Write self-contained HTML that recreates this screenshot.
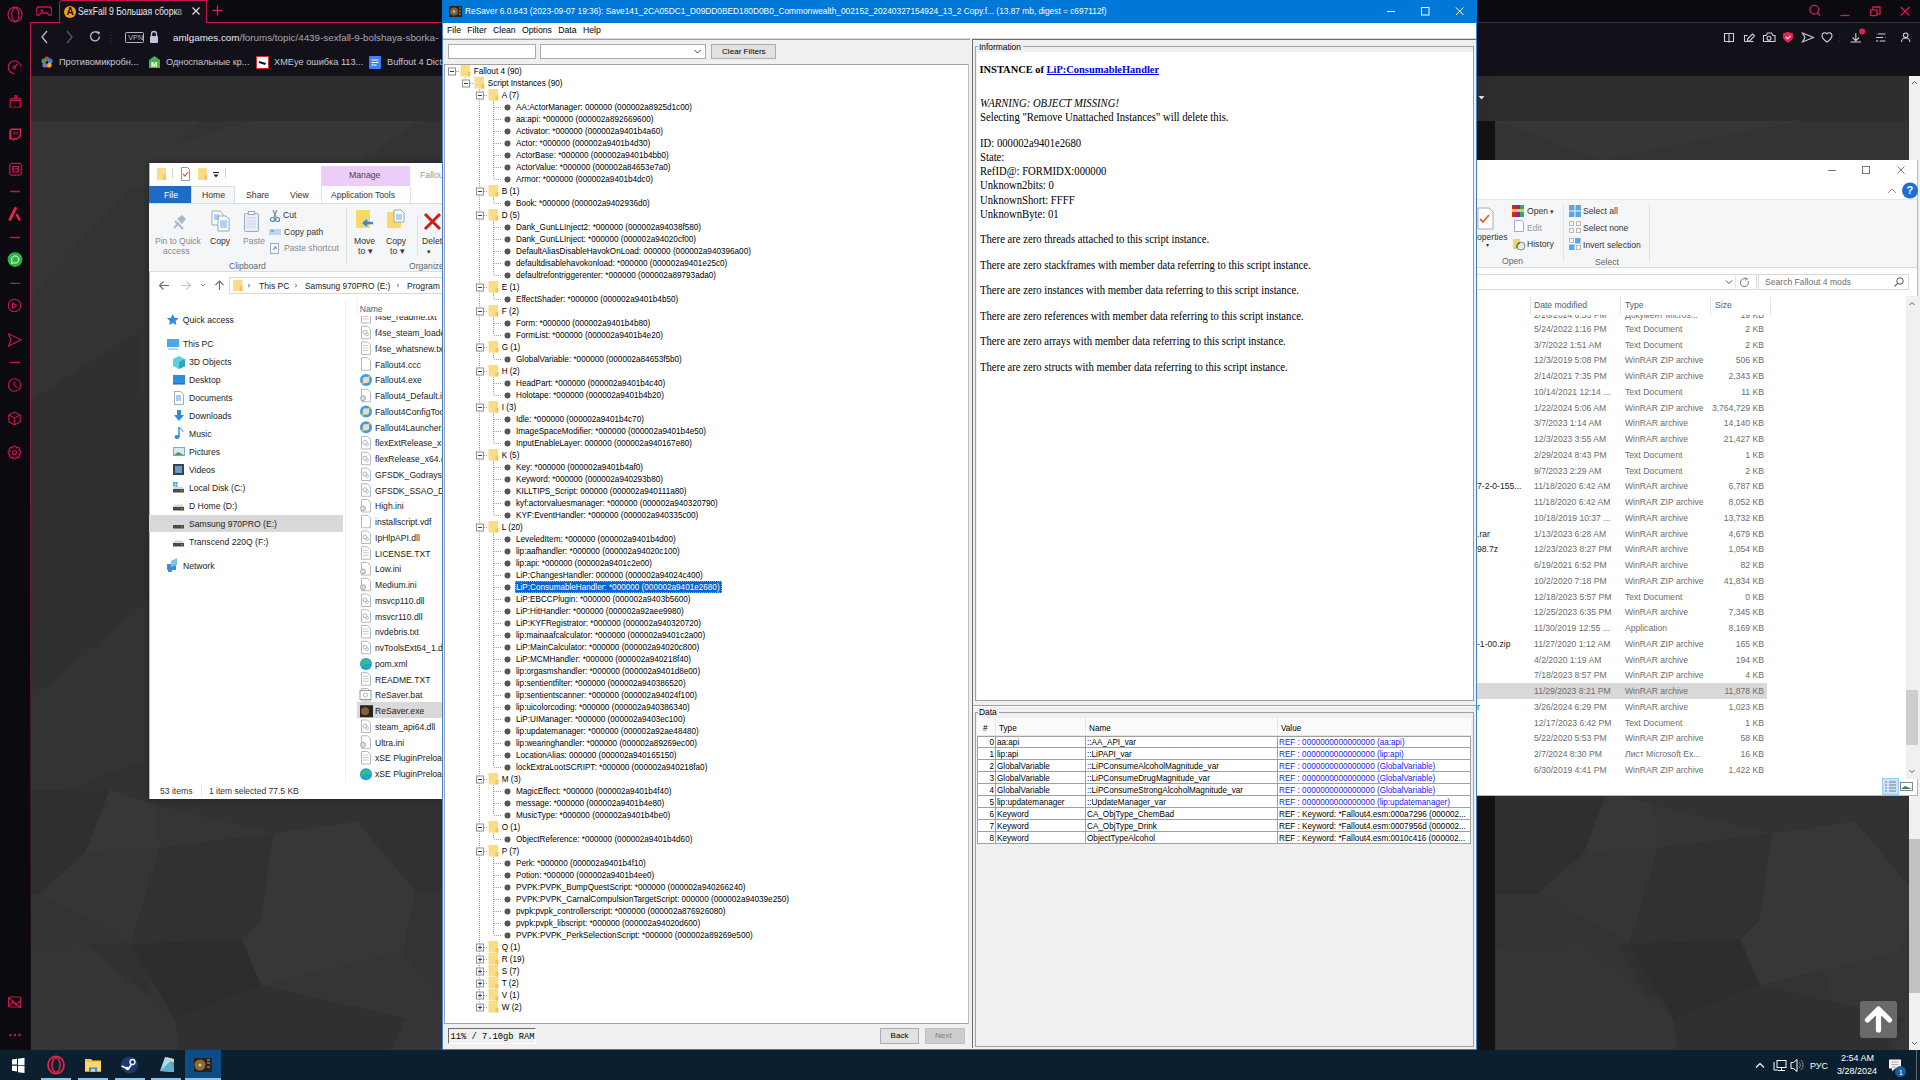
<!DOCTYPE html>
<html><head><meta charset="utf-8">
<style>
*{margin:0;padding:0;box-sizing:border-box}
html,body{width:1920px;height:1080px;overflow:hidden;background:#333;font-family:"Liberation Sans",sans-serif}
.a{position:absolute}
.t{position:absolute;white-space:nowrap;line-height:1}

</style></head><body>
<svg class="a" style="left:0;top:0" width="1920" height="1080" viewBox="0 0 1920 1080">
  <rect width="1920" height="1080" fill="#333"/>
  <!-- header band -->
  <rect x="31" y="76" width="1889" height="45" fill="#2e2e2e"/>
  <!-- subtle polygons -->
  <polygon points="31,121 31,300 80,240 200,121" fill="#353535"/>
  <polygon points="60,180 250,121 420,121 300,200" fill="#363636"/>
  <polygon points="31,400 140,330 149,600 31,700" fill="#303030"/>
  <polygon points="31,800 149,760 149,1050 31,1050" fill="#313131"/>
  <polygon points="160,900 300,840 420,1050 200,1050" fill="#2f2f2f"/>
  <polygon points="240,960 330,870 443,1000 443,1050 300,1050" fill="#353535"/>
  <polygon points="1495,121 1600,160 1800,121" fill="#363636"/>
  <polygon points="1560,840 1700,800 1800,900 1650,1000" fill="#303030"/>
  <polygon points="1780,850 1908,820 1908,1050 1850,1050" fill="#353535"/>
  <polygon points="1495,950 1600,1050 1495,1050" fill="#2f2f2f"/>
  <rect x="1477" y="121" width="18" height="929" fill="#121212"/>
</svg>
<div class="a" style="left:0;top:0;width:1920px;height:22px;background:#0b0a10"></div>
<div class="a" style="left:0;top:22px;width:30px;height:1028px;background:#0b0a10"></div>
<div class="a" style="left:31px;top:23px;width:1889px;height:53px;background:#12111a"></div>
<!-- red frame lines -->
<div class="a" style="left:30px;top:22px;width:1px;height:1028px;background:linear-gradient(#c21a44,#9a2040 27%,#5e1a30 60%,#150d14 95%)"></div>
<div class="a" style="left:30px;top:22px;width:30px;height:1px;background:#c21a44"></div>
<div class="a" style="left:206px;top:22px;width:800px;height:1px;background:#c21a44"></div>
<!-- active tab -->
<svg class="a" style="left:36px;top:5px" width="16" height="12"><path d="M3 2h10a2.5 2.5 0 0 1 2.4 2l0.6 4a2 2 0 0 1-3.5 1.5l-1.5-1.5h-6l-1.5 1.5a2 2 0 0 1-3.5-1.5l0.6-4a2.5 2.5 0 0 1 2.4-2z" fill="none" stroke="#c8194a" stroke-width="1.3"/><path d="M4.5 5.5h3M6 4v3" stroke="#c8194a"/></svg>
<div class="a" style="left:59px;top:0;width:148px;height:23px;background:#12111a;border:1px solid #c21a44;border-bottom:none;border-top-left-radius:4px"></div>
<div class="a" style="left:64px;top:6px;width:12px;height:12px;border-radius:50%;background:#f2a007"></div>
<div class="t" style="left:66.5px;top:7px;font-size:10px;font-weight:bold;color:#111">A</div>
<div class="t" style="left:78px;top:5.5px;font-size:8.6px;color:#e8e8f0;transform:scaleY(1.25);transform-origin:0 0">SexFall 9 Большая сборка</div>
<div class="a" style="left:176px;top:1px;width:12px;height:21px;background:linear-gradient(90deg,rgba(18,17,26,0),#12111a)"></div>
<svg class="a" style="left:191px;top:6px" width="10" height="10"><path d="M1.5 1.5L8.5 8.5M8.5 1.5L1.5 8.5" stroke="#ddd" stroke-width="1.2"/></svg>
<svg class="a" style="left:212px;top:5px" width="11" height="11"><path d="M5.5 0.5V10.5M0.5 5.5H10.5" stroke="#d91d4a" stroke-width="1.4"/></svg>
<!-- sidebar icons -->
<svg class="a" style="left:0;top:0" width="30" height="1050">
 <g fill="none" stroke="#c8194a" stroke-width="1.2">
  <ellipse cx="15" cy="14.5" rx="7" ry="7.3"/><ellipse cx="15.3" cy="14.5" rx="3.6" ry="6.6"/>
  <path d="M14.5 73.5 A6.3 6.3 0 1 1 20.8 66.5" /><path d="M20.8 68.5 v0.6 M20.6 70.5 v0.5" />
  <circle cx="14.3" cy="67.3" r="1.3"/><path d="M15.2 66.3 L17.5 64"/>
  <path d="M9.8 107 l0.8 -8.2 h9.6 l0.2 8.2z M14.8 98.8 v-3.3 h1.6 v3.3 M10.3 100.6 h10"/>
 </g>
 <path d="M12 103 h1.8 v4 h-1.8z M16.3 103 h1.8 v4 h-1.8z" fill="#0b0a10"/>
 <path d="M9.3 130.5 l1.5 -2 h10.2 v7.7 l-3.5 3.4 h-2.6 l-2.2 2 v-2 h-3.4z" fill="#e51f4f"/>
 <path d="M11.3 130 h8.3 v5.6 l-2.3 2.3 h-2.8 l-1.6 1.5 v-1.5 h-1.6z" fill="#0b0a10"/>
 <path d="M14.2 131.6 v3 M17.2 131.6 v3" stroke="#e51f4f" stroke-width="1.1"/>
 <g fill="none" stroke="#c8194a" stroke-width="1.1">
  <rect x="9.8" y="163.5" width="11.5" height="11.5" rx="1.5"/><rect x="12.8" y="166.5" width="5.5" height="5.5"/>
  <path d="M13.5 171 v-3.5 l2 2 l2 -2 v3.5" stroke-width="0.8"/>
  <path d="M12.5 162.5 v1 M15.5 162.5 v1 M18.5 162.5 v1 M12.5 175 v1 M15.5 175 v1 M18.5 175 v1 M8.8 166.5 h1 M8.8 169.5 h1 M8.8 172.5 h1 M21.3 166.5 h1 M21.3 169.5 h1 M21.3 172.5 h1"/>
 </g>
 <g stroke="#c8194a" stroke-width="1.3"><path d="M10.2 191.5 h9.6 M10.2 237.5 h9.6 M10.2 283.3 h9.6 M10.2 362.5 h9.6"/></g>
 <path d="M10 219.5 L15.5 208.3" stroke="#e51f4f" stroke-width="3" stroke-linecap="round"/><path d="M17 215 L19.3 219.5" stroke="#e51f4f" stroke-width="2.6" stroke-linecap="round"/>
 <circle cx="15" cy="259.6" r="7.4" fill="#2ab748"/>
 <path d="M11.3 263.5 l0.7 -2.3 a3.6 3.6 0 1 1 1.5 1.5z" fill="none" stroke="#fff" stroke-width="0.9"/>
 <g fill="none" stroke="#c8194a" stroke-width="1.1">
  <circle cx="14.5" cy="305.5" r="6.2"/><path d="M12.5 303 l4.2 2.5 l-4.2 2.5z"/>
  <path d="M8.5 333.8 l12.5 6 l-12.5 6.2 l2.5 -6.2z"/>
  <circle cx="14.5" cy="385" r="6.2"/><path d="M14.2 381.5 v3.5 l2.5 2.7"/>
  <path d="M14.5 412 l5.7 3 v7 l-5.7 3 l-5.7 -3 v-7z M8.8 415 l5.7 3 l5.7 -3 M14.5 418 v7"/>
  <path d="M13.2 446.3 h2.6 l0.5 1.7 l1.7 -0.8 l1.8 1.8 l-0.8 1.7 l1.7 0.5 v2.6 l-1.7 0.5 l0.8 1.7 l-1.8 1.8 l-1.7 -0.8 l-0.5 1.7 h-2.6 l-0.5 -1.7 l-1.7 0.8 l-1.8 -1.8 l0.8 -1.7 l-1.7 -0.5 v-2.6 l1.7 -0.5 l-0.8 -1.7 l1.8 -1.8 l1.7 0.8z"/><circle cx="14.5" cy="452.5" r="2"/>
  <rect x="8.5" y="997" width="12" height="10" rx="1"/><path d="M9 1006 l4 -4 l3 3 l4 -4"/><path d="M9 998 l12 10"/>
 </g>
 <g fill="#c8194a"><circle cx="10.5" cy="1035" r="1.2"/><circle cx="15" cy="1035" r="1.2"/><circle cx="19.5" cy="1035" r="1.2"/></g>
</svg>
<!-- address bar -->
<svg class="a" style="left:31px;top:23px" width="420" height="53">
 <g fill="none" stroke="#bdbcc8" stroke-width="1.3">
  <path d="M16 8 l-5 6 l5 6"/>
 </g>
 <path d="M36 8 l5 6 l-5 6" fill="none" stroke="#5a5966" stroke-width="1.3"/>
 <path d="M67 10 a4.5 4.5 0 1 0 1.5 3.5" fill="none" stroke="#bdbcc8" stroke-width="1.3"/><path d="M65 8 l4 1 l-1 3z" fill="#bdbcc8"/>
 <path d="M80 9 v1 M80 12 v1 M80 15 v1 M80 18 v1" stroke="#3c3b48" stroke-width="1"/>
 <rect x="94.5" y="9.5" width="18" height="10" rx="1" fill="none" stroke="#b8b7c4" stroke-width="1"/>
 <text x="97.3" y="17.3" font-size="7.2" fill="#b8b7c4" font-family="Liberation Sans">VPN</text>
 <rect x="119" y="13" width="8" height="7" rx="1" fill="#c9c0e0"/><path d="M120.5 13 v-2 a2.5 2.5 0 0 1 5 0 v2" fill="none" stroke="#c9c0e0" stroke-width="1.3"/>
 <text x="142" y="17.6" font-size="9.8" fill="#ecebf3" font-family="Liberation Sans">amlgames.com<tspan fill="#a9a8b5">/forums/topic/4439-sexfall-9-bolshaya-sborka-</tspan></text>
</svg>
<!-- bookmarks -->
<svg class="a" style="left:31px;top:52px" width="420" height="24">
 <g transform="translate(16,10)"><circle cx="0" cy="-3" r="2.6" fill="#e53935"/><circle cx="3" cy="-1" r="2.6" fill="#1e88e5"/><circle cx="2" cy="3" r="2.6" fill="#ffb300"/><circle cx="-2" cy="3" r="2.6" fill="#8e6bbf"/><circle cx="-3" cy="-1" r="2.6" fill="#43a047"/><circle cx="0" cy="0.5" r="1.3" fill="#111"/></g>
 <text x="28" y="13.3" font-size="9.2" fill="#c9c8d4" font-family="Liberation Sans">Противомикробн...</text>
 <path d="M118 16 v-8 l5.5 -4 l5.5 4 v8z" fill="#4caf50"/><text x="120" y="15" font-size="7.5" fill="#fff" font-weight="bold" font-family="Liberation Sans">M</text>
 <text x="135" y="13.3" font-size="9.2" fill="#c9c8d4" font-family="Liberation Sans">Односпальные кр...</text>
 <rect x="225.5" y="4.5" width="12" height="12" fill="#fff" stroke="#d32f2f" stroke-width="1"/><path d="M228 9 l7 2 l-1 2 l-6 -2z" fill="#111"/>
 <text x="243" y="13.3" font-size="9.2" fill="#c9c8d4" font-family="Liberation Sans">XMEye ошибка 113...</text>
 <rect x="338" y="4" width="12" height="13" rx="1" fill="#3b82f6"/><path d="M340.5 8h7M340.5 10.5h7M340.5 13h5" stroke="#fff" stroke-width="1"/>
 <text x="356" y="13.3" font-size="9.2" fill="#c9c8d4" font-family="Liberation Sans">Buffout 4 Dict</text>
</svg>
<!-- right side opera controls -->
<svg class="a" style="left:1700px;top:0" width="220" height="76">
 <g fill="none" stroke="#d91d4a" stroke-width="1.3">
  <circle cx="114.3" cy="9.7" r="4.3"/><path d="M117.3 12.8 l2.8 2.8"/>
  <path d="M140.4 15.5 h9.2"/>
  <rect x="170.5" y="9.8" width="6.5" height="5.8" rx="0.8"/><path d="M173 9.8 v-2.8 h7 v6.8 h-3"/>
  <path d="M200.8 7 l8.6 8.6 M209.4 7 l-8.6 8.6"/>
 </g>
 <g fill="none" stroke="#cfcfd8" stroke-width="1.1">
  <path d="M24.5 33.5 h4 l0.5 0.5 l0.5 -0.5 h4 v8 h-4 l-0.5 0.5 l-0.5 -0.5 h-4z M29 34 v7.5"/>
  <path d="M44.5 41.5 h9 M44.5 41.5 v-6 h3 M47.5 39 l5 -5 l2 2 l-5 5 h-2z"/>
  <path d="M63.5 35.5 h2.5 l1.5 -2.5 h4 l1.5 2.5 h2 v6 h-11.5z"/><circle cx="69" cy="38.3" r="2"/>
  <path d="M102.5 33 l11 4.5 l-11 4.5 l2.5 -4.5z"/>
  <path d="M122 35.5 a2.8 2.8 0 0 1 5 -1.7 a2.8 2.8 0 0 1 5 1.7 c0 3 -5 6.5 -5 6.5 s-5 -3.5 -5 -6.5z"/>
  <path d="M155.8 33 v7 M152.5 37.5 l3.3 3.3 l3.3 -3.3 M151 41.5 v0.5 h9.5 v-0.5"/>
  <path d="M176 34 h9.5 M176 37.5 h9.5 M176 41 h9.5"/>
  <circle cx="205.7" cy="35.3" r="2.3"/><path d="M201.5 42 a4.2 4 0 0 1 8.4 0"/>
 </g>
 <path d="M139.8 34 v1 M139.8 37 v1 M139.8 40 v1" stroke="#3c3b48"/>
 <path d="M176 34 h2 M183 37.5 h2 M178 41 h2" stroke="#12111a" stroke-width="1.5"/>
 <path d="M83 33.5 l5 -1.8 l5 1.8 v3.5 c0 3.5 -5 5.5 -5 5.5 s-5 -2 -5 -5.5z" fill="#e8234f"/><path d="M85.8 37 l1.8 1.8 l3 -3" fill="none" stroke="#fff" stroke-width="1.1"/>
 <circle cx="162.1" cy="31.5" r="3" fill="#e8234f"/>
</svg>
<div class="a" style="left:1909px;top:76px;width:11px;height:974px;background:#f0f0f0"></div>
<svg class="a" style="left:31px;top:0" width="412" height="1050"><polygon points="-73.2,790.0 78.4,790.0 54.4,852.6 8.6,893.5 -73.2,893.5" fill="#2f2f2f"/><polygon points="78.4,790.0 124.2,804.4 129.0,847.8 54.4,852.6" fill="#373737"/><polygon points="8.6,893.5 54.4,852.6 129.0,847.8 100.1,944.0" fill="#353535"/><polygon points="129.0,847.8 242.1,833.3 230.0,920.0 210.8,939.2 100.1,944.0" fill="#313131"/><polygon points="210.8,939.2 230.0,984.9 143.4,1018.6 100.1,944.0" fill="#2d2d2d"/><polygon points="242.1,833.3 326.3,821.3 384.1,891.1 372.0,951.3 230.0,984.9 210.8,939.2 230.0,920.0" fill="#373737"/><polygon points="143.4,1018.6 230.0,984.9 374.5,1018.6 360.0,1049.9 148.2,1049.9" fill="#303030"/><polygon points="-73.2,946.4 54.4,944.0 143.4,1018.6 148.2,1049.9 -73.2,1049.9" fill="#353535"/><polygon points="-73.2,893.5 8.6,893.5 100.1,944.0 54.4,944.0 -73.2,946.4" fill="#333333"/><polygon points="326.3,821.3 420.2,790.0 420.2,891.1 384.1,891.1" fill="#313131"/><polygon points="124.2,804.4 242.1,833.3 129.0,847.8" fill="#353535"/><polygon points="78.4,790.0 420.2,790.0 326.3,821.3 242.1,833.3 124.2,804.4" fill="#323232"/></svg><svg class="a" style="left:1495px;top:0" width="414" height="1050"><polygon points="-38.7,790.0 112.9,790.0 88.9,852.6 43.1,893.5 -38.7,893.5" fill="#2f2f2f"/><polygon points="112.9,790.0 158.7,804.4 163.5,847.8 88.9,852.6" fill="#373737"/><polygon points="43.1,893.5 88.9,852.6 163.5,847.8 134.6,944.0" fill="#353535"/><polygon points="163.5,847.8 276.6,833.3 264.5,920.0 245.3,939.2 134.6,944.0" fill="#313131"/><polygon points="245.3,939.2 264.5,984.9 177.9,1018.6 134.6,944.0" fill="#2d2d2d"/><polygon points="276.6,833.3 360.8,821.3 418.6,891.1 406.5,951.3 264.5,984.9 245.3,939.2 264.5,920.0" fill="#373737"/><polygon points="177.9,1018.6 264.5,984.9 409.0,1018.6 394.5,1049.9 182.7,1049.9" fill="#303030"/><polygon points="-38.7,946.4 88.9,944.0 177.9,1018.6 182.7,1049.9 -38.7,1049.9" fill="#353535"/><polygon points="-38.7,893.5 43.1,893.5 134.6,944.0 88.9,944.0 -38.7,946.4" fill="#333333"/><polygon points="360.8,821.3 454.7,790.0 454.7,891.1 418.6,891.1" fill="#313131"/><polygon points="158.7,804.4 276.6,833.3 163.5,847.8" fill="#353535"/><polygon points="112.9,790.0 454.7,790.0 360.8,821.3 276.6,833.3 158.7,804.4" fill="#323232"/></svg><div class="a" style="left:1909px;top:839px;width:11px;height:154px;background:#c1c1c1"></div>
<svg class="a" style="left:1909px;top:76px" width="11" height="974"><path d="M3 8l2.5-2.5l2.5 2.5" stroke="#606060" fill="none"/><path d="M3 966l2.5 2.5l2.5-2.5" stroke="#606060" fill="none"/></svg>
<div class="a" style="left:1860px;top:1001px;width:37px;height:37px;background:#6a6a6a;border-radius:3px"></div>
<svg class="a" style="left:1860px;top:1001px" width="37" height="37"><path d="M18.5 8l-11 11M18.5 8l11 11M18.5 9v20" stroke="#fff" stroke-width="5.2" stroke-linecap="round" fill="none"/></svg>
<div class="a" style="left:1477px;top:76px;width:18px;height:45px;background:#2c2c2c"></div>
<svg class="a" style="left:1478px;top:95px" width="8" height="6"><path d="M0.5 1h6l-3 3.5z" fill="#ddd"/></svg>
<div class="a" style="left:149px;top:163px;width:294px;height:636px;background:#fff;box-shadow:0 0 6px rgba(0,0,0,.35);border-left:1px solid #b8b8b8"></div>
<svg class="a" style="left:149px;top:163px" width="294" height="24">
<path d="M8 5h9v12h-9z" fill="#f9dc84"/><path d="M14.5 12h2.5v5h-2.5z" fill="#eec55a"/>
<path d="M23.5 5v10" stroke="#cfcfcf"/>
<path d="M32.5 4.5h6l2 2v11h-8z" fill="#fff" stroke="#9a9a9a"/><path d="M34 11l2 2l3-4" stroke="#e8542a" stroke-width="1.2" fill="none"/>
<path d="M49 5h9v12h-9z" fill="#f9dc84"/><path d="M55.5 12h2.5v5h-2.5z" fill="#eec55a"/>
<path d="M64 9.5h6" stroke="#222"/><path d="M64.5 11.5h5l-2.5 3z" fill="#222"/>
<path d="M76.5 5v10" stroke="#cfcfcf"/>
</svg>
<div class="a" style="left:321px;top:166px;width:89px;height:20px;background:#eccdf7"></div>
<div class="t" style="left:349px;top:171.32px;font-size:8.7px;color:#444;">Manage</div>
<div class="t" style="left:420px;top:170.82px;font-size:8.7px;color:#999;">Fallou</div>
<div class="a" style="left:149px;top:186px;width:42px;height:17px;background:#1f6dc2"></div>
<div class="t" style="left:164px;top:190.82px;font-size:8.7px;color:#fff;">File</div>
<div class="a" style="left:191px;top:186px;width:43.5px;height:18px;background:#f5f6f7;border:1px solid #dadbdc;border-bottom:none"></div>
<div class="t" style="left:202px;top:190.82px;font-size:8.7px;color:#333;">Home</div>
<div class="t" style="left:246px;top:190.82px;font-size:8.7px;color:#333;">Share</div>
<div class="t" style="left:290px;top:190.82px;font-size:8.7px;color:#333;">View</div>
<div class="a" style="left:320.5px;top:186px;width:1px;height:17px;background:#eadcf0"></div>
<div class="a" style="left:409.5px;top:186px;width:1px;height:17px;background:#eadcf0"></div>
<div class="t" style="left:331px;top:190.90px;font-size:8.55px;color:#333;">Application Tools</div>
<div class="a" style="left:149px;top:203px;width:294px;height:69px;background:#f5f6f7;border-top:1px solid #dadbdc;border-bottom:1px solid #dadbdc"></div>
<svg class="a" style="left:149px;top:203px" width="294" height="69">
<g transform="translate(22,11)"><path d="M3 14l5-5" stroke="#a9b8cc" stroke-width="2"/><path d="M6 5l5-4l4 4l-4 5z" fill="#a9b8cc"/><path d="M4 7l8 8" stroke="#a9b8cc" stroke-width="2"/></g>
<g transform="translate(62,7)"><path d="M1 1h8l3 3v11h-11z" fill="#fff" stroke="#9aa"/><path d="M7 6h8l3 3v12h-11z" fill="#fff" stroke="#9aa"/><path d="M9 11h7M9 13h7M9 15h7M9 17h7M3 5h5M3 7h5M3 9h5" stroke="#6aa0e6" stroke-width="1"/></g>
<g transform="translate(95,8)"><rect x="0.5" y="2.5" width="14" height="18" rx="1" fill="#e8eef8" stroke="#9aaac0"/><rect x="4.5" y="0.5" width="6" height="3" fill="#fff" stroke="#9aaac0"/><path d="M3 7h9M3 10h9M3 13h9M3 16h9" stroke="#c8d4e6"/></g>
<g transform="translate(121,6)" fill="none" stroke="#3b89c8" stroke-width="1.2"><circle cx="2.5" cy="10.5" r="2"/><circle cx="7.5" cy="10.5" r="2"/><path d="M3.5 9L7 1M6.5 9L3 1" stroke="#888"/></g>
<rect x="120" y="26" width="12" height="6" fill="#b9d8f2"/><path d="M122 28h3" stroke="#4a7aa8"/>
<g transform="translate(121,40)"><rect x="0.5" y="0.5" width="8" height="10" fill="#f4f6fa" stroke="#9aaac0"/><path d="M3 7l3-3M4 4h2v2" stroke="#5a8ac0" fill="none"/></g>
<path d="M197.5 5v56" stroke="#e2e3e4"/>
<g transform="translate(207,7)"><path d="M0 0h14v18h-14z" fill="#f9d86a"/><path d="M8 13h9M11 10l-3 3l3 3" stroke="#2e8ce0" stroke-width="2.4" fill="none"/></g>
<g transform="translate(238,7)"><path d="M0 2h14v16h-14z" fill="#f9d86a"/><path d="M7 0h7l3 3v9h-10z" fill="#fff" stroke="#9aa"/><path d="M9 5h6M9 7h6M9 9h6" stroke="#6aa0e6"/></g>
<path d="M268.5 12v40" stroke="#e2e3e4"/>
<path d="M276 11l15 15M291 11l-15 15" stroke="#d51a1a" stroke-width="3"/>
</svg>
<div class="t" style="left:155px;top:236.92px;font-size:8.5px;color:#888;">Pin to Quick</div>
<div class="t" style="left:163px;top:246.92px;font-size:8.5px;color:#888;">access</div>
<div class="t" style="left:210px;top:236.87px;font-size:8.6px;color:#333;">Copy</div>
<div class="t" style="left:243px;top:236.87px;font-size:8.6px;color:#888;">Paste</div>
<div class="t" style="left:283px;top:210.87px;font-size:8.6px;color:#333;">Cut</div>
<div class="t" style="left:284px;top:227.87px;font-size:8.6px;color:#333;">Copy path</div>
<div class="t" style="left:284px;top:243.87px;font-size:8.6px;color:#888;">Paste shortcut</div>
<div class="t" style="left:229px;top:261.87px;font-size:8.6px;color:#666;">Clipboard</div>
<div class="t" style="left:354px;top:236.87px;font-size:8.6px;color:#333;">Move</div>
<div class="t" style="left:358px;top:246.87px;font-size:8.6px;color:#333;">to ▾</div>
<div class="t" style="left:386px;top:236.87px;font-size:8.6px;color:#333;">Copy</div>
<div class="t" style="left:390px;top:246.87px;font-size:8.6px;color:#333;">to ▾</div>
<div class="t" style="left:422px;top:236.87px;font-size:8.6px;color:#333;">Delet</div>
<div class="t" style="left:427px;top:247.64px;font-size:7px;color:#333;">▾</div>
<div class="t" style="left:409px;top:261.87px;font-size:8.6px;color:#666;">Organize</div>
<svg class="a" style="left:149px;top:272px" width="294" height="27">
<path d="M11 13.5h9M14.5 9.5l-4 4l4 4" stroke="#6b6b6b" stroke-width="1.1" fill="none"/>
<path d="M32 13.5h9M37.5 9.5l4 4l-4 4" stroke="#c8c8c8" stroke-width="1.1" fill="none"/>
<path d="M52 12l2 2l2-2" stroke="#8a8a8a" fill="none"/>
<path d="M70.5 18V9.5M66.5 13l4-4l4 4" stroke="#6b6b6b" stroke-width="1.1" fill="none"/>
<rect x="80.5" y="5.5" width="220" height="16" fill="#fff" stroke="#d9d9d9"/>
<path d="M84 8h9.5v11h-9.5z" fill="#f9dc84"/><path d="M90.5 14h3v5h-3z" fill="#eec55a"/>
<path d="M99 12l2 1.5l-2 1.5M146 12l2 1.5l-2 1.5M248 12l2 1.5l-2 1.5" stroke="#777" fill="none"/>
</svg>
<div class="t" style="left:259px;top:281.57px;font-size:8.6px;color:#222;">This PC</div>
<div class="t" style="left:305px;top:281.69px;font-size:8.35px;color:#222;">Samsung 970PRO (E:)</div>
<div class="t" style="left:407px;top:281.57px;font-size:8.6px;color:#222;">Program</div>
<div class="a" style="left:345px;top:299px;width:1px;height:484px;background:#f0f0f0"></div>
<div class="a" style="left:149px;top:515px;width:194px;height:17px;background:#d9d9d9"></div>
<div class="t" style="left:182.8px;top:315.87px;font-size:8.6px;color:#222;">Quick access</div>
<div class="t" style="left:183px;top:339.87px;font-size:8.6px;color:#222;">This PC</div>
<div class="t" style="left:189px;top:357.87px;font-size:8.6px;color:#222;">3D Objects</div>
<div class="t" style="left:189px;top:375.87px;font-size:8.6px;color:#222;">Desktop</div>
<div class="t" style="left:189px;top:393.87px;font-size:8.6px;color:#222;">Documents</div>
<div class="t" style="left:189px;top:411.87px;font-size:8.6px;color:#222;">Downloads</div>
<div class="t" style="left:189px;top:429.87px;font-size:8.6px;color:#222;">Music</div>
<div class="t" style="left:189px;top:447.87px;font-size:8.6px;color:#222;">Pictures</div>
<div class="t" style="left:189px;top:465.87px;font-size:8.6px;color:#222;">Videos</div>
<div class="t" style="left:189px;top:483.87px;font-size:8.6px;color:#222;">Local Disk (C:)</div>
<div class="t" style="left:189px;top:501.87px;font-size:8.6px;color:#222;">D Home (D:)</div>
<div class="t" style="left:189px;top:519.87px;font-size:8.6px;color:#222;">Samsung 970PRO (E:)</div>
<div class="t" style="left:189px;top:537.87px;font-size:8.6px;color:#222;">Transcend 220Q (F:)</div>
<div class="t" style="left:183px;top:561.87px;font-size:8.6px;color:#222;">Network</div>
<svg class="a" style="left:149px;top:290px" width="200" height="300"><path d="M23.80000000000001 24l1.8 3.8l4 .5l-3 2.8l.8 4l-3.6-2l-3.6 2l.8-4l-3-2.8l4-.5z" fill="#2f8ce0"/><rect x="18" y="49" width="12" height="8" fill="#49a8e8"/><path d="M19 59h10" stroke="#9ab"/><path d="M30 66l6 3v7l-6 3l-6-3v-7z" fill="#5fd0e0"/><path d="M30 72l6-3v7l-6 3z" fill="#2aa6c0"/><rect x="24" y="85" width="12" height="9" fill="#2f8ce0"/><path d="M24 94h12" stroke="#1b5fa8"/><path d="M25.5 101.5h6l3 3v10h-9z" fill="#fff" stroke="#aaa"/><path d="M27 106h5M27 108h5M27 110h5" stroke="#5a9ae0"/><path d="M28 120h4v5h3l-5 6l-5-6h3z" fill="#2f8ce0"/><path d="M30 137v10" stroke="#2f8ce0" stroke-width="1.5"/><ellipse cx="28" cy="147" rx="2.5" ry="2" fill="#2f8ce0"/><path d="M30 137q3 2 4 5" stroke="#2f8ce0" fill="none"/><rect x="24.5" y="157.5" width="11" height="8" fill="#dbe8f0" stroke="#8aa"/><path d="M25 165l4-3l6 3z" fill="#4a9a60"/><rect x="24" y="174" width="11" height="11" fill="#345"/><rect x="26" y="176" width="7" height="7" fill="#6a9ad0"/><path d="M25.5 196.5h8l1.5 2.5h-11z" fill="#d8d8d8"/><rect x="24" y="199" width="11" height="3.5" fill="#4a4a4a"/><rect x="32" y="200" width="1.5" height="1.2" fill="#3c3"/><path d="M24 192h2v2h-2zM26.5 192h2v2h-2zM24 194.5h2v2h-2zM26.5 194.5h2v2h-2z" fill="#2fa0f0"/><path d="M25.5 214.5h8l1.5 2.5h-11z" fill="#d8d8d8"/><rect x="24" y="217" width="11" height="3.5" fill="#4a4a4a"/><rect x="32" y="218" width="1.5" height="1.2" fill="#3c3"/><path d="M25.5 232.5h8l1.5 2.5h-11z" fill="#d8d8d8"/><rect x="24" y="235" width="11" height="3.5" fill="#4a4a4a"/><rect x="32" y="236" width="1.5" height="1.2" fill="#3c3"/><path d="M25.5 250.5h8l1.5 2.5h-11z" fill="#d8d8d8"/><rect x="24" y="253" width="11" height="3.5" fill="#4a4a4a"/><rect x="32" y="254" width="1.5" height="1.2" fill="#3c3"/><path d="M18 274h9v6h-9z" fill="#3b8fd8"/><path d="M22 271l6-3v7l-6 2z" fill="#7ec0f0"/><rect x="19" y="280" width="4" height="2" fill="#3b8fd8"/></svg>
<div class="t" style="left:359.7px;top:304.87px;font-size:8.6px;color:#4c607a;">Name</div>
<div class="a" style="left:357px;top:702px;width:86px;height:16px;background:#d9d9d9"></div>
<div class="t" style="left:375px;top:313.37px;font-size:8.6px;color:#222;">f4se_readme.txt</div>
<div class="t" style="left:375px;top:329.12px;font-size:8.6px;color:#222;">f4se_steam_loader.dll</div>
<div class="t" style="left:375px;top:344.87px;font-size:8.6px;color:#222;">f4se_whatsnew.txt</div>
<div class="t" style="left:375px;top:360.62px;font-size:8.6px;color:#222;">Fallout4.ccc</div>
<div class="t" style="left:375px;top:376.37px;font-size:8.6px;color:#222;">Fallout4.exe</div>
<div class="t" style="left:375px;top:392.12px;font-size:8.6px;color:#222;">Fallout4_Default.ini</div>
<div class="t" style="left:375px;top:407.87px;font-size:8.6px;color:#222;">Fallout4ConfigTool.exe</div>
<div class="t" style="left:375px;top:423.62px;font-size:8.6px;color:#222;">Fallout4Launcher.exe</div>
<div class="t" style="left:375px;top:439.37px;font-size:8.6px;color:#222;">flexExtRelease_x64.dll</div>
<div class="t" style="left:375px;top:455.12px;font-size:8.6px;color:#222;">flexRelease_x64.dll</div>
<div class="t" style="left:375px;top:470.87px;font-size:8.6px;color:#222;">GFSDK_GodraysLib.x64.dll</div>
<div class="t" style="left:375px;top:486.62px;font-size:8.6px;color:#222;">GFSDK_SSAO_D3D11.win64.dll</div>
<div class="t" style="left:375px;top:502.37px;font-size:8.6px;color:#222;">High.ini</div>
<div class="t" style="left:375px;top:518.12px;font-size:8.6px;color:#222;">installscript.vdf</div>
<div class="t" style="left:375px;top:533.87px;font-size:8.6px;color:#222;">IpHlpAPI.dll</div>
<div class="t" style="left:375px;top:549.62px;font-size:8.6px;color:#222;">LICENSE.TXT</div>
<div class="t" style="left:375px;top:565.37px;font-size:8.6px;color:#222;">Low.ini</div>
<div class="t" style="left:375px;top:581.12px;font-size:8.6px;color:#222;">Medium.ini</div>
<div class="t" style="left:375px;top:596.87px;font-size:8.6px;color:#222;">msvcp110.dll</div>
<div class="t" style="left:375px;top:612.62px;font-size:8.6px;color:#222;">msvcr110.dll</div>
<div class="t" style="left:375px;top:628.37px;font-size:8.6px;color:#222;">nvdebris.txt</div>
<div class="t" style="left:375px;top:644.12px;font-size:8.6px;color:#222;">nvToolsExt64_1.dll</div>
<div class="t" style="left:375px;top:659.87px;font-size:8.6px;color:#222;">pom.xml</div>
<div class="t" style="left:375px;top:675.62px;font-size:8.6px;color:#222;">README.TXT</div>
<div class="t" style="left:375px;top:691.37px;font-size:8.6px;color:#222;">ReSaver.bat</div>
<div class="t" style="left:375px;top:707.12px;font-size:8.6px;color:#222;">ReSaver.exe</div>
<div class="t" style="left:375px;top:722.87px;font-size:8.6px;color:#222;">steam_api64.dll</div>
<div class="t" style="left:375px;top:738.62px;font-size:8.6px;color:#222;">Ultra.ini</div>
<div class="t" style="left:375px;top:754.37px;font-size:8.6px;color:#222;">xSE PluginPreloader.txt</div>
<div class="t" style="left:375px;top:770.12px;font-size:8.6px;color:#222;">xSE PluginPreloader.html</div>
<svg class="a" style="left:355px;top:300px" width="88" height="490"><path d="M6.5 10.5h6l3 3v9.5h-9z" fill="#fff" stroke="#b8b8b8"/><path d="M8 14.0h5.5M8 16.5h5.5M8 19.0h5.5" stroke="#bdbdbd" stroke-width="0.8"/><path d="M6.5 26.25h6l3 3v9.5h-9z" fill="#fff" stroke="#b8b8b8"/><circle cx="10" cy="32.25" r="2" fill="none" stroke="#a8b8c8"/><circle cx="12" cy="34.25" r="1.5" fill="none" stroke="#a8c8e0"/><path d="M6.5 42.0h6l3 3v9.5h-9z" fill="#fff" stroke="#b8b8b8"/><path d="M8 45.5h5.5M8 48.0h5.5M8 50.5h5.5" stroke="#bdbdbd" stroke-width="0.8"/><path d="M6.5 57.75h6l3 3v9.5h-9z" fill="#fff" stroke="#b8b8b8"/><circle cx="11" cy="80.0" r="6" fill="#3d9be8"/><path d="M7 84.0L15 76.0" stroke="#f2d23a" stroke-width="1.6"/><circle cx="11" cy="80.0" r="3.3" fill="#eadcc0"/><path d="M6.5 89.25h6l3 3v9.5h-9z" fill="#fff" stroke="#b8b8b8"/><circle cx="8" cy="98.25" r="2.5" fill="#ddd" stroke="#aaa"/><circle cx="11" cy="111.5" r="6" fill="#3d9be8"/><path d="M7 115.5L15 107.5" stroke="#f2d23a" stroke-width="1.6"/><circle cx="11" cy="111.5" r="3.3" fill="#eadcc0"/><circle cx="11" cy="127.25" r="6" fill="#3d9be8"/><path d="M7 131.25L15 123.25" stroke="#f2d23a" stroke-width="1.6"/><circle cx="11" cy="127.25" r="3.3" fill="#eadcc0"/><path d="M6.5 136.5h6l3 3v9.5h-9z" fill="#fff" stroke="#b8b8b8"/><circle cx="10" cy="142.5" r="2" fill="none" stroke="#a8b8c8"/><circle cx="12" cy="144.5" r="1.5" fill="none" stroke="#a8c8e0"/><path d="M6.5 152.25h6l3 3v9.5h-9z" fill="#fff" stroke="#b8b8b8"/><circle cx="10" cy="158.25" r="2" fill="none" stroke="#a8b8c8"/><circle cx="12" cy="160.25" r="1.5" fill="none" stroke="#a8c8e0"/><path d="M6.5 168.0h6l3 3v9.5h-9z" fill="#fff" stroke="#b8b8b8"/><circle cx="10" cy="174.0" r="2" fill="none" stroke="#a8b8c8"/><circle cx="12" cy="176.0" r="1.5" fill="none" stroke="#a8c8e0"/><path d="M6.5 183.75h6l3 3v9.5h-9z" fill="#fff" stroke="#b8b8b8"/><circle cx="10" cy="189.75" r="2" fill="none" stroke="#a8b8c8"/><circle cx="12" cy="191.75" r="1.5" fill="none" stroke="#a8c8e0"/><path d="M6.5 199.5h6l3 3v9.5h-9z" fill="#fff" stroke="#b8b8b8"/><circle cx="8" cy="208.5" r="2.5" fill="#ddd" stroke="#aaa"/><path d="M6.5 215.25h6l3 3v9.5h-9z" fill="#fff" stroke="#b8b8b8"/><path d="M6.5 231.0h6l3 3v9.5h-9z" fill="#fff" stroke="#b8b8b8"/><circle cx="10" cy="237.0" r="2" fill="none" stroke="#a8b8c8"/><circle cx="12" cy="239.0" r="1.5" fill="none" stroke="#a8c8e0"/><path d="M6.5 246.75h6l3 3v9.5h-9z" fill="#fff" stroke="#b8b8b8"/><path d="M8 250.25h5.5M8 252.75h5.5M8 255.25h5.5" stroke="#bdbdbd" stroke-width="0.8"/><path d="M6.5 262.5h6l3 3v9.5h-9z" fill="#fff" stroke="#b8b8b8"/><circle cx="8" cy="271.5" r="2.5" fill="#ddd" stroke="#aaa"/><path d="M6.5 278.25h6l3 3v9.5h-9z" fill="#fff" stroke="#b8b8b8"/><circle cx="8" cy="287.25" r="2.5" fill="#ddd" stroke="#aaa"/><path d="M6.5 294.0h6l3 3v9.5h-9z" fill="#fff" stroke="#b8b8b8"/><circle cx="10" cy="300.0" r="2" fill="none" stroke="#a8b8c8"/><circle cx="12" cy="302.0" r="1.5" fill="none" stroke="#a8c8e0"/><path d="M6.5 309.75h6l3 3v9.5h-9z" fill="#fff" stroke="#b8b8b8"/><circle cx="10" cy="315.75" r="2" fill="none" stroke="#a8b8c8"/><circle cx="12" cy="317.75" r="1.5" fill="none" stroke="#a8c8e0"/><path d="M6.5 325.5h6l3 3v9.5h-9z" fill="#fff" stroke="#b8b8b8"/><path d="M8 329.0h5.5M8 331.5h5.5M8 334.0h5.5" stroke="#bdbdbd" stroke-width="0.8"/><path d="M6.5 341.25h6l3 3v9.5h-9z" fill="#fff" stroke="#b8b8b8"/><circle cx="10" cy="347.25" r="2" fill="none" stroke="#a8b8c8"/><circle cx="12" cy="349.25" r="1.5" fill="none" stroke="#a8c8e0"/><circle cx="11" cy="364.0" r="6" fill="#1e9be0"/><path d="M6 365.0a5 5 0 0 1 10 -1h-6a3 3 0 0 0 5 3" fill="#36c27a"/><path d="M6.5 372.75h6l3 3v9.5h-9z" fill="#fff" stroke="#b8b8b8"/><path d="M8 376.25h5.5M8 378.75h5.5M8 381.25h5.5" stroke="#bdbdbd" stroke-width="0.8"/><path d="M6.5 388.5h6l3 3v9.5h-9z" fill="#fff" stroke="#b8b8b8"/><rect x="5" y="390.5" width="11" height="9" fill="#fff" stroke="#999"/><circle cx="10.5" cy="395.0" r="2" fill="none" stroke="#a8b8c8"/><rect x="5" y="405.25" width="13" height="12" fill="#2a2418"/><circle cx="10" cy="411.25" r="4" fill="#7d6140"/><path d="M6.5 420.0h6l3 3v9.5h-9z" fill="#fff" stroke="#b8b8b8"/><circle cx="10" cy="426.0" r="2" fill="none" stroke="#a8b8c8"/><circle cx="12" cy="428.0" r="1.5" fill="none" stroke="#a8c8e0"/><path d="M6.5 435.75h6l3 3v9.5h-9z" fill="#fff" stroke="#b8b8b8"/><circle cx="8" cy="444.75" r="2.5" fill="#ddd" stroke="#aaa"/><path d="M6.5 451.5h6l3 3v9.5h-9z" fill="#fff" stroke="#b8b8b8"/><path d="M8 455.0h5.5M8 457.5h5.5M8 460.0h5.5" stroke="#bdbdbd" stroke-width="0.8"/><circle cx="11" cy="474.25" r="6" fill="#1e9be0"/><path d="M6 475.25a5 5 0 0 1 10 -1h-6a3 3 0 0 0 5 3" fill="#36c27a"/></svg>
<div class="a" style="left:347px;top:299px;width:96px;height:17px;background:#fff"></div>
<div class="t" style="left:359.7px;top:304.87px;font-size:8.6px;color:#4c607a;">Name</div>
<div class="a" style="left:357px;top:299px;width:1px;height:17px;background:#f0f0f0"></div>
<div class="t" style="left:160px;top:786.87px;font-size:8.6px;color:#333;">53 items</div>
<div class="t" style="left:209px;top:786.92px;font-size:8.5px;color:#333;">1 item selected  77.5 KB</div>
<div class="a" style="left:201px;top:785px;width:1px;height:12px;background:#e6e6e6"></div><div class="a" style="left:1477px;top:160px;width:441px;height:636px;background:#fff;border-right:1px solid #b9b9b9;border-bottom:1px solid #b9b9b9"></div>
<svg class="a" style="left:1477px;top:160px" width="441" height="40">
<path d="M351 10.5h8" stroke="#777"/>
<rect x="385.5" y="6.5" width="7" height="7" fill="none" stroke="#777"/>
<path d="M420.5 6.5l7 7M427.5 6.5l-7 7" stroke="#777"/>
<path d="M411 33l4-4l4 4" stroke="#999" fill="none"/>
<circle cx="433" cy="30.5" r="8" fill="#1c6fd1"/>
</svg>
<div class="t" style="left:1428.5px;top:-4.13px;font-size:8.6px;color:#000;"></div>
<div class="t" style="left:1929px;top:0"></div>
<div class="t" style="left:1906.5px;top:184.5px;font-size:11px;font-weight:bold;color:#fff">?</div>
<div class="a" style="left:1477px;top:199px;width:440px;height:69px;background:#f5f6f7;border-top:1px solid #e4e5e6;border-bottom:1px solid #dadbdc"></div>
<svg class="a" style="left:1477px;top:199px" width="441" height="69">
<path d="M1 9h11l4 4v17h-15z" fill="#fff" stroke="#aaa"/><path d="M3 20l3 3l6-7" stroke="#e8632a" stroke-width="1.8" fill="none"/>
<rect x="35" y="6" width="12" height="12" fill="#8b2a8a"/><rect x="35" y="6" width="4" height="12" fill="#d22"/><rect x="43" y="6" width="4" height="12" fill="#3a6"/><rect x="35" y="10" width="12" height="3" fill="#f5c542"/>
<path d="M37.5 21.5h7l2 2v9h-9z" fill="#fff" stroke="#aac"/>
<path d="M36 40h7v10h-7z" fill="#f5d26a"/><circle cx="44" cy="47" r="4" fill="#e8e8e8" stroke="#888"/><path d="M40 49a4 4 0 0 1 3-5" stroke="#2a9a3a" stroke-width="1.5" fill="none"/>
<path d="M86.5 5v58" stroke="#e2e3e4"/>
<g fill="#5aa7e6"><rect x="92" y="6" width="5.5" height="5.5"/><rect x="98.5" y="6" width="5.5" height="5.5"/><rect x="92" y="12.5" width="5.5" height="5.5"/><rect x="98.5" y="12.5" width="5.5" height="5.5"/></g>
<g fill="none" stroke="#bbb"><rect x="92.5" y="22.5" width="4" height="4"/><rect x="99.5" y="22.5" width="4" height="4"/><rect x="92.5" y="29.5" width="4" height="4"/><rect x="99.5" y="29.5" width="4" height="4"/></g>
<g><rect x="92.5" y="39.5" width="4" height="4" fill="none" stroke="#bbb"/><rect x="98" y="39" width="5.5" height="5.5" fill="#5aa7e6"/><rect x="92" y="45.5" width="5.5" height="5.5" fill="#5aa7e6"/><rect x="99.5" y="46.5" width="4" height="4" fill="none" stroke="#bbb"/></g>
<path d="M172.5 5v58" stroke="#e2e3e4"/>
</svg>
<div class="t" style="left:1477px;top:232.87px;font-size:8.6px;color:#333;">operties</div>
<div class="t" style="left:1486px;top:241.62px;font-size:6px;color:#333;">▾</div>
<div class="t" style="left:1527px;top:207.37px;font-size:8.6px;color:#333;">Open</div>
<div class="t" style="left:1550px;top:207.64px;font-size:7px;color:#333;">▾</div>
<div class="t" style="left:1527px;top:223.87px;font-size:8.6px;color:#999;">Edit</div>
<div class="t" style="left:1527px;top:240.37px;font-size:8.6px;color:#333;">History</div>
<div class="t" style="left:1502px;top:257.47px;font-size:8.6px;color:#666;">Open</div>
<div class="t" style="left:1583px;top:206.87px;font-size:8.6px;color:#333;">Select all</div>
<div class="t" style="left:1583px;top:223.87px;font-size:8.6px;color:#333;">Select none</div>
<div class="t" style="left:1583px;top:240.57px;font-size:8.6px;color:#333;">Invert selection</div>
<div class="t" style="left:1595px;top:257.87px;font-size:8.6px;color:#666;">Select</div>
<div class="a" style="left:1477px;top:274px;width:280px;height:16px;background:#fff;border:1px solid #d9d9d9;border-left:none"></div>
<div class="a" style="left:1735px;top:274px;width:1px;height:16px;background:#e5e5e5"></div>
<svg class="a" style="left:1720px;top:274px" width="40" height="16"><path d="M6 6.5l3 3l3-3" stroke="#555" fill="none"/><path d="M26 5a4 4 0 1 0 2 2" stroke="#777" fill="none"/><path d="M25 3.5l2.5 1.5l-2 1.5" stroke="#777" fill="none"/></svg>
<div class="a" style="left:1758px;top:274px;width:151px;height:16px;background:#fff;border:1px solid #d9d9d9"></div>
<div class="t" style="left:1765px;top:277.87px;font-size:8.6px;color:#6d6d6d;">Search Fallout 4 mods</div>
<svg class="a" style="left:1893px;top:276px" width="12" height="12"><circle cx="7" cy="5" r="3.2" fill="none" stroke="#555"/><path d="M4.6 7.4l-3 3" stroke="#555" stroke-width="1.2"/></svg>
<div class="a" style="left:1529.5px;top:297px;width:1px;height:18px;background:#e5e5e5"></div>
<div class="a" style="left:1619.5px;top:297px;width:1px;height:18px;background:#e5e5e5"></div>
<div class="a" style="left:1709.5px;top:297px;width:1px;height:18px;background:#e5e5e5"></div>
<div class="a" style="left:1769.5px;top:297px;width:1px;height:18px;background:#e5e5e5"></div>
<div class="t" style="left:1534px;top:300.87px;font-size:8.6px;color:#4c607a;">Date modified</div>
<div class="t" style="left:1625px;top:300.87px;font-size:8.6px;color:#4c607a;">Type</div>
<div class="t" style="left:1715px;top:300.87px;font-size:8.6px;color:#4c607a;">Size</div>
<div class="a" style="left:1477px;top:683px;width:290px;height:16px;background:#d9d9d9"></div>
<div class="t" style="left:1534px;top:324.87px;font-size:8.6px;color:#6d6d6d;">5/24/2022 1:16 PM</div>
<div class="t" style="left:1625px;top:324.87px;font-size:8.6px;color:#6d6d6d;">Text Document</div>
<div class="t" style="left:1745.355334375px;top:324.87px;font-size:8.6px;color:#6d6d6d;">2 KB</div>
<div class="t" style="left:1534px;top:340.62px;font-size:8.6px;color:#6d6d6d;">3/7/2022 1:51 AM</div>
<div class="t" style="left:1625px;top:340.62px;font-size:8.6px;color:#6d6d6d;">Text Document</div>
<div class="t" style="left:1745.355334375px;top:340.62px;font-size:8.6px;color:#6d6d6d;">2 KB</div>
<div class="t" style="left:1534px;top:356.37px;font-size:8.6px;color:#6d6d6d;">12/3/2019 5:08 PM</div>
<div class="t" style="left:1625px;top:356.37px;font-size:8.6px;color:#6d6d6d;">WinRAR ZIP archive</div>
<div class="t" style="left:1735.789446875px;top:356.37px;font-size:8.6px;color:#6d6d6d;">506 KB</div>
<div class="t" style="left:1534px;top:372.12px;font-size:8.6px;color:#6d6d6d;">2/14/2021 7:35 PM</div>
<div class="t" style="left:1625px;top:372.12px;font-size:8.6px;color:#6d6d6d;">WinRAR ZIP archive</div>
<div class="t" style="left:1728.61718125px;top:372.12px;font-size:8.6px;color:#6d6d6d;">2,343 KB</div>
<div class="t" style="left:1534px;top:387.87px;font-size:8.6px;color:#6d6d6d;">10/14/2021 12:14 ...</div>
<div class="t" style="left:1625px;top:387.87px;font-size:8.6px;color:#6d6d6d;">Text Document</div>
<div class="t" style="left:1741.210671875px;top:387.87px;font-size:8.6px;color:#6d6d6d;">11 KB</div>
<div class="t" style="left:1534px;top:403.62px;font-size:8.6px;color:#6d6d6d;">1/22/2024 5:06 AM</div>
<div class="t" style="left:1625px;top:403.62px;font-size:8.6px;color:#6d6d6d;">WinRAR ZIP archive</div>
<div class="t" style="left:1711.879028125px;top:403.62px;font-size:8.6px;color:#6d6d6d;">3,764,729 KB</div>
<div class="t" style="left:1534px;top:419.37px;font-size:8.6px;color:#6d6d6d;">3/7/2023 1:14 AM</div>
<div class="t" style="left:1625px;top:419.37px;font-size:8.6px;color:#6d6d6d;">WinRAR archive</div>
<div class="t" style="left:1723.8342375px;top:419.37px;font-size:8.6px;color:#6d6d6d;">14,140 KB</div>
<div class="t" style="left:1534px;top:435.12px;font-size:8.6px;color:#6d6d6d;">12/3/2023 3:55 AM</div>
<div class="t" style="left:1625px;top:435.12px;font-size:8.6px;color:#6d6d6d;">WinRAR archive</div>
<div class="t" style="left:1723.8342375px;top:435.12px;font-size:8.6px;color:#6d6d6d;">21,427 KB</div>
<div class="t" style="left:1534px;top:450.87px;font-size:8.6px;color:#6d6d6d;">2/29/2024 8:43 PM</div>
<div class="t" style="left:1625px;top:450.87px;font-size:8.6px;color:#6d6d6d;">Text Document</div>
<div class="t" style="left:1745.355334375px;top:450.87px;font-size:8.6px;color:#6d6d6d;">1 KB</div>
<div class="t" style="left:1534px;top:466.62px;font-size:8.6px;color:#6d6d6d;">9/7/2023 2:29 AM</div>
<div class="t" style="left:1625px;top:466.62px;font-size:8.6px;color:#6d6d6d;">Text Document</div>
<div class="t" style="left:1745.355334375px;top:466.62px;font-size:8.6px;color:#6d6d6d;">2 KB</div>
<div class="t" style="left:1534px;top:482.37px;font-size:8.6px;color:#6d6d6d;">11/18/2020 6:42 AM</div>
<div class="t" style="left:1625px;top:482.37px;font-size:8.6px;color:#6d6d6d;">WinRAR archive</div>
<div class="t" style="left:1728.61718125px;top:482.37px;font-size:8.6px;color:#6d6d6d;">6,787 KB</div>
<div class="t" style="left:1477px;top:482.37px;font-size:8.6px;color:#222;">7-2-0-155...</div>
<div class="t" style="left:1534px;top:498.12px;font-size:8.6px;color:#6d6d6d;">11/18/2020 6:42 AM</div>
<div class="t" style="left:1625px;top:498.12px;font-size:8.6px;color:#6d6d6d;">WinRAR ZIP archive</div>
<div class="t" style="left:1728.61718125px;top:498.12px;font-size:8.6px;color:#6d6d6d;">8,052 KB</div>
<div class="t" style="left:1534px;top:513.87px;font-size:8.6px;color:#6d6d6d;">10/18/2019 10:37 ...</div>
<div class="t" style="left:1625px;top:513.87px;font-size:8.6px;color:#6d6d6d;">WinRAR archive</div>
<div class="t" style="left:1723.8342375px;top:513.87px;font-size:8.6px;color:#6d6d6d;">13,732 KB</div>
<div class="t" style="left:1534px;top:529.62px;font-size:8.6px;color:#6d6d6d;">1/13/2023 6:28 AM</div>
<div class="t" style="left:1625px;top:529.62px;font-size:8.6px;color:#6d6d6d;">WinRAR archive</div>
<div class="t" style="left:1728.61718125px;top:529.62px;font-size:8.6px;color:#6d6d6d;">4,679 KB</div>
<div class="t" style="left:1477px;top:529.62px;font-size:8.6px;color:#222;">.rar</div>
<div class="t" style="left:1534px;top:545.37px;font-size:8.6px;color:#6d6d6d;">12/23/2023 8:27 PM</div>
<div class="t" style="left:1625px;top:545.37px;font-size:8.6px;color:#6d6d6d;">WinRAR archive</div>
<div class="t" style="left:1728.61718125px;top:545.37px;font-size:8.6px;color:#6d6d6d;">1,054 KB</div>
<div class="t" style="left:1477px;top:545.37px;font-size:8.6px;color:#222;">98.7z</div>
<div class="t" style="left:1534px;top:561.12px;font-size:8.6px;color:#6d6d6d;">6/19/2021 6:52 PM</div>
<div class="t" style="left:1625px;top:561.12px;font-size:8.6px;color:#6d6d6d;">WinRAR archive</div>
<div class="t" style="left:1740.572390625px;top:561.12px;font-size:8.6px;color:#6d6d6d;">82 KB</div>
<div class="t" style="left:1534px;top:576.87px;font-size:8.6px;color:#6d6d6d;">10/2/2020 7:18 PM</div>
<div class="t" style="left:1625px;top:576.87px;font-size:8.6px;color:#6d6d6d;">WinRAR ZIP archive</div>
<div class="t" style="left:1723.8342375px;top:576.87px;font-size:8.6px;color:#6d6d6d;">41,834 KB</div>
<div class="t" style="left:1534px;top:592.62px;font-size:8.6px;color:#6d6d6d;">12/18/2023 5:57 PM</div>
<div class="t" style="left:1625px;top:592.62px;font-size:8.6px;color:#6d6d6d;">Text Document</div>
<div class="t" style="left:1745.355334375px;top:592.62px;font-size:8.6px;color:#6d6d6d;">0 KB</div>
<div class="t" style="left:1534px;top:608.37px;font-size:8.6px;color:#6d6d6d;">12/25/2023 6:35 PM</div>
<div class="t" style="left:1625px;top:608.37px;font-size:8.6px;color:#6d6d6d;">WinRAR archive</div>
<div class="t" style="left:1728.61718125px;top:608.37px;font-size:8.6px;color:#6d6d6d;">7,345 KB</div>
<div class="t" style="left:1534px;top:624.12px;font-size:8.6px;color:#6d6d6d;">11/30/2019 12:55 ...</div>
<div class="t" style="left:1625px;top:624.12px;font-size:8.6px;color:#6d6d6d;">Application</div>
<div class="t" style="left:1728.61718125px;top:624.12px;font-size:8.6px;color:#6d6d6d;">8,169 KB</div>
<div class="t" style="left:1534px;top:639.87px;font-size:8.6px;color:#6d6d6d;">11/27/2020 1:12 AM</div>
<div class="t" style="left:1625px;top:639.87px;font-size:8.6px;color:#6d6d6d;">WinRAR ZIP archive</div>
<div class="t" style="left:1735.789446875px;top:639.87px;font-size:8.6px;color:#6d6d6d;">165 KB</div>
<div class="t" style="left:1477px;top:639.87px;font-size:8.6px;color:#222;">-1-00.zip</div>
<div class="t" style="left:1534px;top:655.62px;font-size:8.6px;color:#6d6d6d;">4/2/2020 1:19 AM</div>
<div class="t" style="left:1625px;top:655.62px;font-size:8.6px;color:#6d6d6d;">WinRAR archive</div>
<div class="t" style="left:1735.789446875px;top:655.62px;font-size:8.6px;color:#6d6d6d;">194 KB</div>
<div class="t" style="left:1534px;top:671.37px;font-size:8.6px;color:#6d6d6d;">7/18/2023 8:57 PM</div>
<div class="t" style="left:1625px;top:671.37px;font-size:8.6px;color:#6d6d6d;">WinRAR ZIP archive</div>
<div class="t" style="left:1745.355334375px;top:671.37px;font-size:8.6px;color:#6d6d6d;">4 KB</div>
<div class="t" style="left:1534px;top:687.12px;font-size:8.6px;color:#6d6d6d;">11/29/2023 8:21 PM</div>
<div class="t" style="left:1625px;top:687.12px;font-size:8.6px;color:#6d6d6d;">WinRAR archive</div>
<div class="t" style="left:1724.47251875px;top:687.12px;font-size:8.6px;color:#6d6d6d;">11,878 KB</div>
<div class="t" style="left:1534px;top:702.87px;font-size:8.6px;color:#6d6d6d;">3/26/2024 6:29 PM</div>
<div class="t" style="left:1625px;top:702.87px;font-size:8.6px;color:#6d6d6d;">WinRAR archive</div>
<div class="t" style="left:1728.61718125px;top:702.87px;font-size:8.6px;color:#6d6d6d;">1,023 KB</div>
<div class="t" style="left:1477px;top:702.87px;font-size:8.6px;color:#1a3a8a;">r</div>
<div class="t" style="left:1534px;top:718.62px;font-size:8.6px;color:#6d6d6d;">12/17/2023 6:42 PM</div>
<div class="t" style="left:1625px;top:718.62px;font-size:8.6px;color:#6d6d6d;">Text Document</div>
<div class="t" style="left:1745.355334375px;top:718.62px;font-size:8.6px;color:#6d6d6d;">1 KB</div>
<div class="t" style="left:1534px;top:734.37px;font-size:8.6px;color:#6d6d6d;">5/22/2020 5:53 PM</div>
<div class="t" style="left:1625px;top:734.37px;font-size:8.6px;color:#6d6d6d;">WinRAR ZIP archive</div>
<div class="t" style="left:1740.572390625px;top:734.37px;font-size:8.6px;color:#6d6d6d;">58 KB</div>
<div class="t" style="left:1534px;top:750.12px;font-size:8.6px;color:#6d6d6d;">2/7/2024 8:30 PM</div>
<div class="t" style="left:1625px;top:750.12px;font-size:8.6px;color:#6d6d6d;">Лист Microsoft Ex...</div>
<div class="t" style="left:1740.572390625px;top:750.12px;font-size:8.6px;color:#6d6d6d;">16 KB</div>
<div class="t" style="left:1534px;top:765.87px;font-size:8.6px;color:#6d6d6d;">6/30/2019 4:41 PM</div>
<div class="t" style="left:1625px;top:765.87px;font-size:8.6px;color:#6d6d6d;">WinRAR ZIP archive</div>
<div class="t" style="left:1728.61718125px;top:765.87px;font-size:8.6px;color:#6d6d6d;">1,422 KB</div>
<div class="a" style="left:1477px;top:315px;width:290px;height:6px;overflow:hidden"><div style="position:relative;top:-8.5px"><div class="t" style="left:57px;top:4px;font-size:8.6px;color:#6d6d6d">2/26/2024 6:53 PM</div><div class="t" style="left:148px;top:4px;font-size:8.6px;color:#6d6d6d">Документ Micros...</div><div class="t" style="left:263.572390625px;top:4px;font-size:8.6px;color:#6d6d6d">19 KB</div></div></div>
<div class="a" style="left:1906px;top:296px;width:12px;height:483px;background:#f0f0f0"></div>
<div class="a" style="left:1906px;top:690px;width:12px;height:55px;background:#cdcdcd"></div>
<svg class="a" style="left:1906px;top:296px" width="12" height="483"><path d="M3.5 9l2.5-2.5l2.5 2.5" stroke="#606060" fill="none"/><path d="M3.5 474l2.5 2.5l2.5-2.5" stroke="#606060" fill="none"/></svg>
<svg class="a" style="left:1880px;top:778px" width="38" height="18"><rect x="2.5" y="0.5" width="16" height="16" fill="#cce4f7" stroke="#99c9ef"/><path d="M5 4h2M9 4h7M5 7h2M9 7h7M5 10h2M9 10h7M5 13h2M9 13h7" stroke="#6f7f8f"/><rect x="20.5" y="4.5" width="12" height="8" fill="#fff" stroke="#7a8a9a"/><path d="M21 11l4-3l7 3z" fill="#3c7d5a"/></svg><div class="a" style="left:442px;top:0;width:1035px;height:1050px;background:#f0f0f0;border:1px solid #3a82cc;border-top:none"></div>
<div class="a" style="left:442px;top:0;width:1035px;height:23px;background:#0078d7"></div>
<svg class="a" style="left:449px;top:6px" width="13" height="11"><rect width="13" height="11" fill="#2a2418"/><circle cx="5" cy="5.5" r="4" fill="#7d6140"/><circle cx="5" cy="5.5" r="1.2" fill="#d0c0a0"/><path d="M10 2h2M10 5h2M10 8h2" stroke="#999" stroke-width="1"/></svg>
<div class="t" style="left:465px;top:6.3px;font-size:8.33px;color:#fff;transform:scaleY(1.15);transform-origin:0 0">ReSaver 6.0.643 (2023-09-07 19:36): Save141_2CA05DC1_D09DD0BED180D0B0_Commonwealth_002152_20240327154924_13_2 Copy.f... (13.87 mb, digest = c697112f)</div>
<svg class="a" style="left:1380px;top:0" width="96" height="23"><g stroke="#fff" stroke-width="1" fill="none"><path d="M7 11.5h8"/><rect x="41.5" y="7.5" width="7.5" height="7.5"/><path d="M76 7.5l7.5 7.5M83.5 7.5L76 15"/></g></svg>
<div class="a" style="left:443px;top:23px;width:1033px;height:15px;background:#fff"></div>
<div class="t" style="left:447px;top:26px;font-size:8.7px;color:#000">File</div>
<div class="t" style="left:467.318690625px;top:26px;font-size:8.7px;color:#000">Filter</div>
<div class="t" style="left:492.951721875px;top:26px;font-size:8.7px;color:#000">Clean</div>
<div class="t" style="left:521.983190625px;top:26px;font-size:8.7px;color:#000">Options</div>
<div class="t" style="left:558.2659734375001px;top:26px;font-size:8.7px;color:#000">Data</div>
<div class="t" style="left:582.9430921875px;top:26px;font-size:8.7px;color:#000">Help</div>
<div class="a" style="left:443px;top:37.5px;width:1033px;height:1px;background:#d9d9d9"></div>
<div class="a" style="left:443px;top:39px;width:527px;height:1px;background:#a0a0a0"></div>
<div class="a" style="left:448px;top:44px;width:88px;height:15px;background:#fff;border:1px solid #a9a9a9"></div>
<div class="a" style="left:540px;top:44px;width:166px;height:15px;background:#fff;border:1px solid #a9a9a9"></div>
<svg class="a" style="left:693px;top:48px" width="9" height="7"><path d="M1.5 2l3 3l3-3" fill="none" stroke="#444" stroke-width="1"/></svg>
<div class="a" style="left:711px;top:44px;width:65px;height:15px;background:#e1e1e1;border:1px solid #adadad"></div>
<div class="t" style="left:722px;top:47.5px;font-size:8.1px;color:#000">Clear Filters</div>
<div class="a" style="left:444px;top:64px;width:525px;height:960px;background:#fff;border:1px solid #a0a0a0;border-right-color:#bdbdbd"></div>
<svg class="a" style="left:0;top:0" width="980" height="1030"><g stroke="#a0a0a0" stroke-width="1" stroke-dasharray="1 1" fill="none"><path d="M465.5 77V79.5" /><path d="M479.5 89V1003.5" /><path d="M493.5 101V179" /><path d="M493.5 197V203" /><path d="M493.5 221V275" /><path d="M493.5 293V299" /><path d="M493.5 317V335" /><path d="M493.5 353V359" /><path d="M493.5 377V395" /><path d="M493.5 413V443" /><path d="M493.5 461V515" /><path d="M493.5 533V767" /><path d="M493.5 785V815" /><path d="M493.5 833V839" /><path d="M493.5 857V935" /><path d="M456 71.5H460" /><path d="M470 83.5H474" /><path d="M484 95.5H488" /><path d="M494 107.5H501" /><path d="M494 119.5H501" /><path d="M494 131.5H501" /><path d="M494 143.5H501" /><path d="M494 155.5H501" /><path d="M494 167.5H501" /><path d="M494 179.5H501" /><path d="M484 191.5H488" /><path d="M494 203.5H501" /><path d="M484 215.5H488" /><path d="M494 227.5H501" /><path d="M494 239.5H501" /><path d="M494 251.5H501" /><path d="M494 263.5H501" /><path d="M494 275.5H501" /><path d="M484 287.5H488" /><path d="M494 299.5H501" /><path d="M484 311.5H488" /><path d="M494 323.5H501" /><path d="M494 335.5H501" /><path d="M484 347.5H488" /><path d="M494 359.5H501" /><path d="M484 371.5H488" /><path d="M494 383.5H501" /><path d="M494 395.5H501" /><path d="M484 407.5H488" /><path d="M494 419.5H501" /><path d="M494 431.5H501" /><path d="M494 443.5H501" /><path d="M484 455.5H488" /><path d="M494 467.5H501" /><path d="M494 479.5H501" /><path d="M494 491.5H501" /><path d="M494 503.5H501" /><path d="M494 515.5H501" /><path d="M484 527.5H488" /><path d="M494 539.5H501" /><path d="M494 551.5H501" /><path d="M494 563.5H501" /><path d="M494 575.5H501" /><path d="M494 587.5H501" /><path d="M494 599.5H501" /><path d="M494 611.5H501" /><path d="M494 623.5H501" /><path d="M494 635.5H501" /><path d="M494 647.5H501" /><path d="M494 659.5H501" /><path d="M494 671.5H501" /><path d="M494 683.5H501" /><path d="M494 695.5H501" /><path d="M494 707.5H501" /><path d="M494 719.5H501" /><path d="M494 731.5H501" /><path d="M494 743.5H501" /><path d="M494 755.5H501" /><path d="M494 767.5H501" /><path d="M484 779.5H488" /><path d="M494 791.5H501" /><path d="M494 803.5H501" /><path d="M494 815.5H501" /><path d="M484 827.5H488" /><path d="M494 839.5H501" /><path d="M484 851.5H488" /><path d="M494 863.5H501" /><path d="M494 875.5H501" /><path d="M494 887.5H501" /><path d="M494 899.5H501" /><path d="M494 911.5H501" /><path d="M494 923.5H501" /><path d="M494 935.5H501" /><path d="M484 947.5H488" /><path d="M484 959.5H488" /><path d="M484 971.5H488" /><path d="M484 983.5H488" /><path d="M484 995.5H488" /><path d="M484 1007.5H488" /></g>
<rect x="448.5" y="68.0" width="7" height="7" fill="#fff" stroke="#919191" stroke-width="1"/>
<path d="M450 71.5h4" stroke="#1f3e8a" stroke-width="1"/>
<rect x="462.5" y="80.0" width="7" height="7" fill="#fff" stroke="#919191" stroke-width="1"/>
<path d="M464 83.5h4" stroke="#1f3e8a" stroke-width="1"/>
<rect x="476.5" y="92.0" width="7" height="7" fill="#fff" stroke="#919191" stroke-width="1"/>
<path d="M478 95.5h4" stroke="#1f3e8a" stroke-width="1"/>
<rect x="476.5" y="188.0" width="7" height="7" fill="#fff" stroke="#919191" stroke-width="1"/>
<path d="M478 191.5h4" stroke="#1f3e8a" stroke-width="1"/>
<rect x="476.5" y="212.0" width="7" height="7" fill="#fff" stroke="#919191" stroke-width="1"/>
<path d="M478 215.5h4" stroke="#1f3e8a" stroke-width="1"/>
<rect x="476.5" y="284.0" width="7" height="7" fill="#fff" stroke="#919191" stroke-width="1"/>
<path d="M478 287.5h4" stroke="#1f3e8a" stroke-width="1"/>
<rect x="476.5" y="308.0" width="7" height="7" fill="#fff" stroke="#919191" stroke-width="1"/>
<path d="M478 311.5h4" stroke="#1f3e8a" stroke-width="1"/>
<rect x="476.5" y="344.0" width="7" height="7" fill="#fff" stroke="#919191" stroke-width="1"/>
<path d="M478 347.5h4" stroke="#1f3e8a" stroke-width="1"/>
<rect x="476.5" y="368.0" width="7" height="7" fill="#fff" stroke="#919191" stroke-width="1"/>
<path d="M478 371.5h4" stroke="#1f3e8a" stroke-width="1"/>
<rect x="476.5" y="404.0" width="7" height="7" fill="#fff" stroke="#919191" stroke-width="1"/>
<path d="M478 407.5h4" stroke="#1f3e8a" stroke-width="1"/>
<rect x="476.5" y="452.0" width="7" height="7" fill="#fff" stroke="#919191" stroke-width="1"/>
<path d="M478 455.5h4" stroke="#1f3e8a" stroke-width="1"/>
<rect x="476.5" y="524.0" width="7" height="7" fill="#fff" stroke="#919191" stroke-width="1"/>
<path d="M478 527.5h4" stroke="#1f3e8a" stroke-width="1"/>
<rect x="476.5" y="776.0" width="7" height="7" fill="#fff" stroke="#919191" stroke-width="1"/>
<path d="M478 779.5h4" stroke="#1f3e8a" stroke-width="1"/>
<rect x="476.5" y="824.0" width="7" height="7" fill="#fff" stroke="#919191" stroke-width="1"/>
<path d="M478 827.5h4" stroke="#1f3e8a" stroke-width="1"/>
<rect x="476.5" y="848.0" width="7" height="7" fill="#fff" stroke="#919191" stroke-width="1"/>
<path d="M478 851.5h4" stroke="#1f3e8a" stroke-width="1"/>
<rect x="476.5" y="944.0" width="7" height="7" fill="#fff" stroke="#919191" stroke-width="1"/>
<path d="M478 947.5h4" stroke="#1f3e8a" stroke-width="1"/>
<path d="M480 945.5v4" stroke="#1f3e8a" stroke-width="1"/>
<rect x="476.5" y="956.0" width="7" height="7" fill="#fff" stroke="#919191" stroke-width="1"/>
<path d="M478 959.5h4" stroke="#1f3e8a" stroke-width="1"/>
<path d="M480 957.5v4" stroke="#1f3e8a" stroke-width="1"/>
<rect x="476.5" y="968.0" width="7" height="7" fill="#fff" stroke="#919191" stroke-width="1"/>
<path d="M478 971.5h4" stroke="#1f3e8a" stroke-width="1"/>
<path d="M480 969.5v4" stroke="#1f3e8a" stroke-width="1"/>
<rect x="476.5" y="980.0" width="7" height="7" fill="#fff" stroke="#919191" stroke-width="1"/>
<path d="M478 983.5h4" stroke="#1f3e8a" stroke-width="1"/>
<path d="M480 981.5v4" stroke="#1f3e8a" stroke-width="1"/>
<rect x="476.5" y="992.0" width="7" height="7" fill="#fff" stroke="#919191" stroke-width="1"/>
<path d="M478 995.5h4" stroke="#1f3e8a" stroke-width="1"/>
<path d="M480 993.5v4" stroke="#1f3e8a" stroke-width="1"/>
<rect x="476.5" y="1004.0" width="7" height="7" fill="#fff" stroke="#919191" stroke-width="1"/>
<path d="M478 1007.5h4" stroke="#1f3e8a" stroke-width="1"/>
<path d="M480 1005.5v4" stroke="#1f3e8a" stroke-width="1"/>
<path d="M460.5 65h9.5v11.5h-9.5z" fill="#f9dc84"/><path d="M467.5 72h3v4.5h-3z" fill="#efc75a"/>
<path d="M474.5 77h9.5v11.5h-9.5z" fill="#f9dc84"/><path d="M481.5 84h3v4.5h-3z" fill="#efc75a"/>
<path d="M488.5 89h9.5v11.5h-9.5z" fill="#f9dc84"/><path d="M495.5 96h3v4.5h-3z" fill="#efc75a"/>
<path d="M488.5 185h9.5v11.5h-9.5z" fill="#f9dc84"/><path d="M495.5 192h3v4.5h-3z" fill="#efc75a"/>
<path d="M488.5 209h9.5v11.5h-9.5z" fill="#f9dc84"/><path d="M495.5 216h3v4.5h-3z" fill="#efc75a"/>
<path d="M488.5 281h9.5v11.5h-9.5z" fill="#f9dc84"/><path d="M495.5 288h3v4.5h-3z" fill="#efc75a"/>
<path d="M488.5 305h9.5v11.5h-9.5z" fill="#f9dc84"/><path d="M495.5 312h3v4.5h-3z" fill="#efc75a"/>
<path d="M488.5 341h9.5v11.5h-9.5z" fill="#f9dc84"/><path d="M495.5 348h3v4.5h-3z" fill="#efc75a"/>
<path d="M488.5 365h9.5v11.5h-9.5z" fill="#f9dc84"/><path d="M495.5 372h3v4.5h-3z" fill="#efc75a"/>
<path d="M488.5 401h9.5v11.5h-9.5z" fill="#f9dc84"/><path d="M495.5 408h3v4.5h-3z" fill="#efc75a"/>
<path d="M488.5 449h9.5v11.5h-9.5z" fill="#f9dc84"/><path d="M495.5 456h3v4.5h-3z" fill="#efc75a"/>
<path d="M488.5 521h9.5v11.5h-9.5z" fill="#f9dc84"/><path d="M495.5 528h3v4.5h-3z" fill="#efc75a"/>
<path d="M488.5 773h9.5v11.5h-9.5z" fill="#f9dc84"/><path d="M495.5 780h3v4.5h-3z" fill="#efc75a"/>
<path d="M488.5 821h9.5v11.5h-9.5z" fill="#f9dc84"/><path d="M495.5 828h3v4.5h-3z" fill="#efc75a"/>
<path d="M488.5 845h9.5v11.5h-9.5z" fill="#f9dc84"/><path d="M495.5 852h3v4.5h-3z" fill="#efc75a"/>
<path d="M488.5 941h9.5v11.5h-9.5z" fill="#f9dc84"/><path d="M495.5 948h3v4.5h-3z" fill="#efc75a"/>
<path d="M488.5 953h9.5v11.5h-9.5z" fill="#f9dc84"/><path d="M495.5 960h3v4.5h-3z" fill="#efc75a"/>
<path d="M488.5 965h9.5v11.5h-9.5z" fill="#f9dc84"/><path d="M495.5 972h3v4.5h-3z" fill="#efc75a"/>
<path d="M488.5 977h9.5v11.5h-9.5z" fill="#f9dc84"/><path d="M495.5 984h3v4.5h-3z" fill="#efc75a"/>
<path d="M488.5 989h9.5v11.5h-9.5z" fill="#f9dc84"/><path d="M495.5 996h3v4.5h-3z" fill="#efc75a"/>
<path d="M488.5 1001h9.5v11.5h-9.5z" fill="#f9dc84"/><path d="M495.5 1008h3v4.5h-3z" fill="#efc75a"/>
<circle cx="507.5" cy="107.5" r="3" fill="#555"/>
<circle cx="507.5" cy="119.5" r="3" fill="#555"/>
<circle cx="507.5" cy="131.5" r="3" fill="#555"/>
<circle cx="507.5" cy="143.5" r="3" fill="#555"/>
<circle cx="507.5" cy="155.5" r="3" fill="#555"/>
<circle cx="507.5" cy="167.5" r="3" fill="#555"/>
<circle cx="507.5" cy="179.5" r="3" fill="#555"/>
<circle cx="507.5" cy="203.5" r="3" fill="#555"/>
<circle cx="507.5" cy="227.5" r="3" fill="#555"/>
<circle cx="507.5" cy="239.5" r="3" fill="#555"/>
<circle cx="507.5" cy="251.5" r="3" fill="#555"/>
<circle cx="507.5" cy="263.5" r="3" fill="#555"/>
<circle cx="507.5" cy="275.5" r="3" fill="#555"/>
<circle cx="507.5" cy="299.5" r="3" fill="#555"/>
<circle cx="507.5" cy="323.5" r="3" fill="#555"/>
<circle cx="507.5" cy="335.5" r="3" fill="#555"/>
<circle cx="507.5" cy="359.5" r="3" fill="#555"/>
<circle cx="507.5" cy="383.5" r="3" fill="#555"/>
<circle cx="507.5" cy="395.5" r="3" fill="#555"/>
<circle cx="507.5" cy="419.5" r="3" fill="#555"/>
<circle cx="507.5" cy="431.5" r="3" fill="#555"/>
<circle cx="507.5" cy="443.5" r="3" fill="#555"/>
<circle cx="507.5" cy="467.5" r="3" fill="#555"/>
<circle cx="507.5" cy="479.5" r="3" fill="#555"/>
<circle cx="507.5" cy="491.5" r="3" fill="#555"/>
<circle cx="507.5" cy="503.5" r="3" fill="#555"/>
<circle cx="507.5" cy="515.5" r="3" fill="#555"/>
<circle cx="507.5" cy="539.5" r="3" fill="#555"/>
<circle cx="507.5" cy="551.5" r="3" fill="#555"/>
<circle cx="507.5" cy="563.5" r="3" fill="#555"/>
<circle cx="507.5" cy="575.5" r="3" fill="#555"/>
<circle cx="507.5" cy="587.5" r="3" fill="#555"/>
<circle cx="507.5" cy="599.5" r="3" fill="#555"/>
<circle cx="507.5" cy="611.5" r="3" fill="#555"/>
<circle cx="507.5" cy="623.5" r="3" fill="#555"/>
<circle cx="507.5" cy="635.5" r="3" fill="#555"/>
<circle cx="507.5" cy="647.5" r="3" fill="#555"/>
<circle cx="507.5" cy="659.5" r="3" fill="#555"/>
<circle cx="507.5" cy="671.5" r="3" fill="#555"/>
<circle cx="507.5" cy="683.5" r="3" fill="#555"/>
<circle cx="507.5" cy="695.5" r="3" fill="#555"/>
<circle cx="507.5" cy="707.5" r="3" fill="#555"/>
<circle cx="507.5" cy="719.5" r="3" fill="#555"/>
<circle cx="507.5" cy="731.5" r="3" fill="#555"/>
<circle cx="507.5" cy="743.5" r="3" fill="#555"/>
<circle cx="507.5" cy="755.5" r="3" fill="#555"/>
<circle cx="507.5" cy="767.5" r="3" fill="#555"/>
<circle cx="507.5" cy="791.5" r="3" fill="#555"/>
<circle cx="507.5" cy="803.5" r="3" fill="#555"/>
<circle cx="507.5" cy="815.5" r="3" fill="#555"/>
<circle cx="507.5" cy="839.5" r="3" fill="#555"/>
<circle cx="507.5" cy="863.5" r="3" fill="#555"/>
<circle cx="507.5" cy="875.5" r="3" fill="#555"/>
<circle cx="507.5" cy="887.5" r="3" fill="#555"/>
<circle cx="507.5" cy="899.5" r="3" fill="#555"/>
<circle cx="507.5" cy="911.5" r="3" fill="#555"/>
<circle cx="507.5" cy="923.5" r="3" fill="#555"/>
<circle cx="507.5" cy="935.5" r="3" fill="#555"/>
</svg>
<div class="t" style="left:473.7px;top:68.0px;font-size:8.16px;color:#000">Fallout 4 (90)</div>
<div class="t" style="left:487.7px;top:80.0px;font-size:8.16px;color:#000">Script Instances (90)</div>
<div class="t" style="left:501.7px;top:92.0px;font-size:8.16px;color:#000">A (7)</div>
<div class="t" style="left:516px;top:104.0px;font-size:8.16px;color:#000">AA:ActorManager: 000000 (000002a8925d1c00)</div>
<div class="t" style="left:516px;top:116.0px;font-size:8.16px;color:#000">aa:api: *000000 (000002a892669600)</div>
<div class="t" style="left:516px;top:128.0px;font-size:8.16px;color:#000">Activator: *000000 (000002a9401b4a60)</div>
<div class="t" style="left:516px;top:140.0px;font-size:8.16px;color:#000">Actor: *000000 (000002a9401b4d30)</div>
<div class="t" style="left:516px;top:152.0px;font-size:8.16px;color:#000">ActorBase: *000000 (000002a9401b4bb0)</div>
<div class="t" style="left:516px;top:164.0px;font-size:8.16px;color:#000">ActorValue: *000000 (000002a84653e7a0)</div>
<div class="t" style="left:516px;top:176.0px;font-size:8.16px;color:#000">Armor: *000000 (000002a9401b4dc0)</div>
<div class="t" style="left:501.7px;top:188.0px;font-size:8.16px;color:#000">B (1)</div>
<div class="t" style="left:516px;top:200.0px;font-size:8.16px;color:#000">Book: *000000 (000002a9402936d0)</div>
<div class="t" style="left:501.7px;top:212.0px;font-size:8.16px;color:#000">D (5)</div>
<div class="t" style="left:516px;top:224.0px;font-size:8.16px;color:#000">Dank_GunLLInject2: *000000 (000002a94038f580)</div>
<div class="t" style="left:516px;top:236.0px;font-size:8.16px;color:#000">Dank_GunLLInject: *000000 (000002a94020cf00)</div>
<div class="t" style="left:516px;top:248.0px;font-size:8.16px;color:#000">DefaultAliasDisableHavokOnLoad: 000000 (000002a940396a00)</div>
<div class="t" style="left:516px;top:260.0px;font-size:8.16px;color:#000">defaultdisablehavokonload: *000000 (000002a9401e25c0)</div>
<div class="t" style="left:516px;top:272.0px;font-size:8.16px;color:#000">defaultrefontriggerenter: *000000 (000002a89793ada0)</div>
<div class="t" style="left:501.7px;top:284.0px;font-size:8.16px;color:#000">E (1)</div>
<div class="t" style="left:516px;top:296.0px;font-size:8.16px;color:#000">EffectShader: *000000 (000002a9401b4b50)</div>
<div class="t" style="left:501.7px;top:308.0px;font-size:8.16px;color:#000">F (2)</div>
<div class="t" style="left:516px;top:320.0px;font-size:8.16px;color:#000">Form: *000000 (000002a9401b4b80)</div>
<div class="t" style="left:516px;top:332.0px;font-size:8.16px;color:#000">FormList: *000000 (000002a9401b4e20)</div>
<div class="t" style="left:501.7px;top:344.0px;font-size:8.16px;color:#000">G (1)</div>
<div class="t" style="left:516px;top:356.0px;font-size:8.16px;color:#000">GlobalVariable: *000000 (000002a84653f5b0)</div>
<div class="t" style="left:501.7px;top:368.0px;font-size:8.16px;color:#000">H (2)</div>
<div class="t" style="left:516px;top:380.0px;font-size:8.16px;color:#000">HeadPart: *000000 (000002a9401b4c40)</div>
<div class="t" style="left:516px;top:392.0px;font-size:8.16px;color:#000">Holotape: *000000 (000002a9401b4b20)</div>
<div class="t" style="left:501.7px;top:404.0px;font-size:8.16px;color:#000">I (3)</div>
<div class="t" style="left:516px;top:416.0px;font-size:8.16px;color:#000">Idle: *000000 (000002a9401b4c70)</div>
<div class="t" style="left:516px;top:428.0px;font-size:8.16px;color:#000">ImageSpaceModifier: *000000 (000002a9401b4e50)</div>
<div class="t" style="left:516px;top:440.0px;font-size:8.16px;color:#000">InputEnableLayer: 000000 (000002a940167e80)</div>
<div class="t" style="left:501.7px;top:452.0px;font-size:8.16px;color:#000">K (5)</div>
<div class="t" style="left:516px;top:464.0px;font-size:8.16px;color:#000">Key: *000000 (000002a9401b4af0)</div>
<div class="t" style="left:516px;top:476.0px;font-size:8.16px;color:#000">Keyword: *000000 (000002a940293b80)</div>
<div class="t" style="left:516px;top:488.0px;font-size:8.16px;color:#000">KILLTIPS_Script: 000000 (000002a940111a80)</div>
<div class="t" style="left:516px;top:500.0px;font-size:8.16px;color:#000">kyf:actorvaluesmanager: *000000 (000002a940320790)</div>
<div class="t" style="left:516px;top:512.0px;font-size:8.16px;color:#000">KYF:EventHandler: *000000 (000002a940335c00)</div>
<div class="t" style="left:501.7px;top:524.0px;font-size:8.16px;color:#000">L (20)</div>
<div class="t" style="left:516px;top:536.0px;font-size:8.16px;color:#000">LeveledItem: *000000 (000002a9401b4d00)</div>
<div class="t" style="left:516px;top:548.0px;font-size:8.16px;color:#000">lip:aafhandler: *000000 (000002a94020c100)</div>
<div class="t" style="left:516px;top:560.0px;font-size:8.16px;color:#000">lip:api: *000000 (000002a9401c2e00)</div>
<div class="t" style="left:516px;top:572.0px;font-size:8.16px;color:#000">LiP:ChangesHandler: 000000 (000002a94024c400)</div>
<div class="a" style="left:514.5px;top:581px;width:207.20254250000002px;height:12px;background:#0a64d0;outline:1px dotted #8ab4f0;outline-offset:-1px"></div>
<div class="t" style="left:516px;top:584.0px;font-size:8.16px;color:#fff">LiP:ConsumableHandler: *000000 (000002a9401e2680)</div>
<div class="t" style="left:516px;top:596.0px;font-size:8.16px;color:#000">LiP:EBCCPlugin: *000000 (000002a9403b5600)</div>
<div class="t" style="left:516px;top:608.0px;font-size:8.16px;color:#000">LiP:HitHandler: *000000 (000002a92aee9980)</div>
<div class="t" style="left:516px;top:620.0px;font-size:8.16px;color:#000">LiP:KYFRegistrator: *000000 (000002a940320720)</div>
<div class="t" style="left:516px;top:632.0px;font-size:8.16px;color:#000">lip:mainaafcalculator: *000000 (000002a9401c2a00)</div>
<div class="t" style="left:516px;top:644.0px;font-size:8.16px;color:#000">LiP:MainCalculator: *000000 (000002a94020c800)</div>
<div class="t" style="left:516px;top:656.0px;font-size:8.16px;color:#000">LiP:MCMHandler: *000000 (000002a940218f40)</div>
<div class="t" style="left:516px;top:668.0px;font-size:8.16px;color:#000">lip:orgasmshandler: *000000 (000002a9401d8e00)</div>
<div class="t" style="left:516px;top:680.0px;font-size:8.16px;color:#000">lip:sentientfilter: *000000 (000002a940386520)</div>
<div class="t" style="left:516px;top:692.0px;font-size:8.16px;color:#000">lip:sentientscanner: *000000 (000002a94024f100)</div>
<div class="t" style="left:516px;top:704.0px;font-size:8.16px;color:#000">lip:uicolorcoding: *000000 (000002a940386340)</div>
<div class="t" style="left:516px;top:716.0px;font-size:8.16px;color:#000">LiP:UIManager: *000000 (000002a9403ec100)</div>
<div class="t" style="left:516px;top:728.0px;font-size:8.16px;color:#000">lip:updatemanager: *000000 (000002a92ae48480)</div>
<div class="t" style="left:516px;top:740.0px;font-size:8.16px;color:#000">lip:wearinghandler: *000000 (000002a89269ec00)</div>
<div class="t" style="left:516px;top:752.0px;font-size:8.16px;color:#000">LocationAlias: 000000 (000002a940165150)</div>
<div class="t" style="left:516px;top:764.0px;font-size:8.16px;color:#000">lockExtraLootSCRIPT: *000000 (000002a940218fa0)</div>
<div class="t" style="left:501.7px;top:776.0px;font-size:8.16px;color:#000">M (3)</div>
<div class="t" style="left:516px;top:788.0px;font-size:8.16px;color:#000">MagicEffect: *000000 (000002a9401b4f40)</div>
<div class="t" style="left:516px;top:800.0px;font-size:8.16px;color:#000">message: *000000 (000002a9401b4e80)</div>
<div class="t" style="left:516px;top:812.0px;font-size:8.16px;color:#000">MusicType: *000000 (000002a9401b4be0)</div>
<div class="t" style="left:501.7px;top:824.0px;font-size:8.16px;color:#000">O (1)</div>
<div class="t" style="left:516px;top:836.0px;font-size:8.16px;color:#000">ObjectReference: *000000 (000002a9401b4d60)</div>
<div class="t" style="left:501.7px;top:848.0px;font-size:8.16px;color:#000">P (7)</div>
<div class="t" style="left:516px;top:860.0px;font-size:8.16px;color:#000">Perk: *000000 (000002a9401b4f10)</div>
<div class="t" style="left:516px;top:872.0px;font-size:8.16px;color:#000">Potion: *000000 (000002a9401b4ee0)</div>
<div class="t" style="left:516px;top:884.0px;font-size:8.16px;color:#000">PVPK:PVPK_BumpQuestScript: *000000 (000002a940266240)</div>
<div class="t" style="left:516px;top:896.0px;font-size:8.16px;color:#000">PVPK:PVPK_CarnalCompulsionTargetScript: 000000 (000002a94039e250)</div>
<div class="t" style="left:516px;top:908.0px;font-size:8.16px;color:#000">pvpk:pvpk_controllerscript: *000000 (000002a876926080)</div>
<div class="t" style="left:516px;top:920.0px;font-size:8.16px;color:#000">pvpk:pvpk_libscript: *000000 (000002a94020d600)</div>
<div class="t" style="left:516px;top:932.0px;font-size:8.16px;color:#000">PVPK:PVPK_PerkSelectionScript: *000000 (000002a89269e500)</div>
<div class="t" style="left:501.7px;top:944.0px;font-size:8.16px;color:#000">Q (1)</div>
<div class="t" style="left:501.7px;top:956.0px;font-size:8.16px;color:#000">R (19)</div>
<div class="t" style="left:501.7px;top:968.0px;font-size:8.16px;color:#000">S (7)</div>
<div class="t" style="left:501.7px;top:980.0px;font-size:8.16px;color:#000">T (2)</div>
<div class="t" style="left:501.7px;top:992.0px;font-size:8.16px;color:#000">V (1)</div>
<div class="t" style="left:501.7px;top:1004.0px;font-size:8.16px;color:#000">W (2)</div>
<div class="a" style="left:448px;top:1028px;width:88px;height:16px;background:#f0f0f0;border-top:1px solid #6d6d6d;border-left:1px solid #6d6d6d;border-right:1px solid #fff;border-bottom:1px solid #fff"></div>
<div class="t" style="left:450.5px;top:1033px;font-family:'Liberation Mono',monospace;font-size:8.75px;color:#000">11% / 7.10gb RAM</div>
<div class="a" style="left:880px;top:1028px;width:39px;height:16px;background:#e1e1e1;border:1px solid #adadad"></div>
<div class="t" style="left:890.5px;top:1032px;font-size:8.1px;color:#000">Back</div>
<div class="a" style="left:925px;top:1028px;width:40px;height:16px;background:#cccccc;border:1px solid #bfbfbf"></div>
<div class="t" style="left:935px;top:1032px;font-size:8.1px;color:#838383">Next</div>
<div class="a" style="left:972px;top:39px;width:505px;height:1px;background:#6d6d6d"></div>
<div class="a" style="left:972px;top:39px;width:1px;height:1009px;background:#6d6d6d"></div>
<div class="a" style="left:975px;top:46px;width:499px;height:655px;border:1px solid #a0a0a0;border-right-color:#9a9a9a"></div>
<div class="a" style="left:978px;top:41px;width:45px;height:10px;background:#f0f0f0"></div>
<div class="t" style="left:979px;top:42.5px;font-size:8.4px;color:#000">Information</div>
<div class="a" style="left:977px;top:52px;width:496px;height:648px;background:#fff"></div>
<div class="t" style="left:979.5px;top:64.5px;font-family:'Liberation Serif',serif;font-size:10.45px;font-weight:bold;color:#000">INSTANCE of <span style="color:#0000ee;text-decoration:underline">LiP:ConsumableHandler</span></div>
<div class="t" style="left:980px;top:97.1px;font-family:'Liberation Serif',serif;font-size:10.68px;color:#000;transform:scaleY(1.12);transform-origin:0 0"><i>WARNING: OBJECT MISSING!</i></div>
<div class="t" style="left:980px;top:111.1px;font-family:'Liberation Serif',serif;font-size:10.68px;color:#000;transform:scaleY(1.12);transform-origin:0 0">Selecting &quot;Remove Unattached Instances&quot; will delete this.</div>
<div class="t" style="left:980px;top:136.79999999999998px;font-family:'Liberation Serif',serif;font-size:10.68px;color:#000;transform:scaleY(1.12);transform-origin:0 0">ID: 000002a9401e2680</div>
<div class="t" style="left:980px;top:151.1px;font-family:'Liberation Serif',serif;font-size:10.68px;color:#000;transform:scaleY(1.12);transform-origin:0 0">State:</div>
<div class="t" style="left:980px;top:165.1px;font-family:'Liberation Serif',serif;font-size:10.68px;color:#000;transform:scaleY(1.12);transform-origin:0 0">RefID@: FORMIDX:000000</div>
<div class="t" style="left:980px;top:179.1px;font-family:'Liberation Serif',serif;font-size:10.68px;color:#000;transform:scaleY(1.12);transform-origin:0 0">Unknown2bits: 0</div>
<div class="t" style="left:980px;top:193.6px;font-family:'Liberation Serif',serif;font-size:10.68px;color:#000;transform:scaleY(1.12);transform-origin:0 0">UnknownShort: FFFF</div>
<div class="t" style="left:980px;top:208.1px;font-family:'Liberation Serif',serif;font-size:10.68px;color:#000;transform:scaleY(1.12);transform-origin:0 0">UnknownByte: 01</div>
<div class="t" style="left:980px;top:233.1px;font-family:'Liberation Serif',serif;font-size:10.68px;color:#000;transform:scaleY(1.12);transform-origin:0 0">There are zero threads attached to this script instance.</div>
<div class="t" style="left:980px;top:259.1px;font-family:'Liberation Serif',serif;font-size:10.68px;color:#000;transform:scaleY(1.12);transform-origin:0 0">There are zero stackframes with member data referring to this script instance.</div>
<div class="t" style="left:980px;top:284.1px;font-family:'Liberation Serif',serif;font-size:10.68px;color:#000;transform:scaleY(1.12);transform-origin:0 0">There are zero instances with member data referring to this script instance.</div>
<div class="t" style="left:980px;top:310.1px;font-family:'Liberation Serif',serif;font-size:10.68px;color:#000;transform:scaleY(1.12);transform-origin:0 0">There are zero references with member data referring to this script instance.</div>
<div class="t" style="left:980px;top:335.1px;font-family:'Liberation Serif',serif;font-size:10.68px;color:#000;transform:scaleY(1.12);transform-origin:0 0">There are zero arrays with member data referring to this script instance.</div>
<div class="t" style="left:980px;top:361.1px;font-family:'Liberation Serif',serif;font-size:10.68px;color:#000;transform:scaleY(1.12);transform-origin:0 0">There are zero structs with member data referring to this script instance.</div>
<div class="a" style="left:973px;top:705px;width:503px;height:1px;background:#a0a0a0"></div>
<div class="a" style="left:973px;top:706px;width:503px;height:1px;background:#fff"></div>
<div class="a" style="left:975px;top:712px;width:499px;height:335px;border:1px solid #a0a0a0"></div>
<div class="a" style="left:978px;top:707px;width:21px;height:10px;background:#f0f0f0"></div>
<div class="t" style="left:979px;top:707.5px;font-size:8.4px;color:#000">Data</div>
<div class="a" style="left:977px;top:718px;width:494px;height:18px;background:#fbfbfb;border-bottom:1px solid #e5e5e5"></div>
<div class="a" style="left:995px;top:718px;width:1px;height:18px;background:#e5e5e5"></div>
<div class="a" style="left:1085px;top:718px;width:1px;height:18px;background:#e5e5e5"></div>
<div class="a" style="left:1277px;top:718px;width:1px;height:18px;background:#e5e5e5"></div>
<div class="t" style="left:983px;top:724.5px;font-size:8.16px;color:#000">#</div>
<div class="t" style="left:999px;top:724.5px;font-size:8.16px;color:#000">Type</div>
<div class="t" style="left:1089px;top:724.5px;font-size:8.16px;color:#000">Name</div>
<div class="t" style="left:1281px;top:724.5px;font-size:8.16px;color:#000">Value</div>
<div class="a" style="left:977px;top:736px;width:494px;height:108px;background:#fff"></div>
<div class="a" style="left:977px;top:747px;width:494px;height:1px;background:#a0a0a0"></div>
<div class="t" style="left:989.461765px;top:739px;font-size:8.16px;color:#000">0</div>
<div class="t" style="left:997px;top:739px;font-size:8.16px;color:#000">aa:api</div>
<div class="t" style="left:1087px;top:739px;font-size:8.16px;color:#000">::AA_API_var</div>
<div class="t" style="left:1279px;top:739px;font-size:8.16px;color:#1a1aff">REF : 0000000000000000 (aa:api)</div>
<div class="a" style="left:977px;top:759px;width:494px;height:1px;background:#a0a0a0"></div>
<div class="t" style="left:989.461765px;top:751px;font-size:8.16px;color:#000">1</div>
<div class="t" style="left:997px;top:751px;font-size:8.16px;color:#000">lip:api</div>
<div class="t" style="left:1087px;top:751px;font-size:8.16px;color:#000">::LiPAPI_var</div>
<div class="t" style="left:1279px;top:751px;font-size:8.16px;color:#1a1aff">REF : 0000000000000000 (lip:api)</div>
<div class="a" style="left:977px;top:771px;width:494px;height:1px;background:#a0a0a0"></div>
<div class="t" style="left:989.461765px;top:763px;font-size:8.16px;color:#000">2</div>
<div class="t" style="left:997px;top:763px;font-size:8.16px;color:#000">GlobalVariable</div>
<div class="t" style="left:1087px;top:763px;font-size:8.16px;color:#000">::LiPConsumeAlcoholMagnitude_var</div>
<div class="t" style="left:1279px;top:763px;font-size:8.16px;color:#1a1aff">REF : 0000000000000000 (GlobalVariable)</div>
<div class="a" style="left:977px;top:783px;width:494px;height:1px;background:#a0a0a0"></div>
<div class="t" style="left:989.461765px;top:775px;font-size:8.16px;color:#000">3</div>
<div class="t" style="left:997px;top:775px;font-size:8.16px;color:#000">GlobalVariable</div>
<div class="t" style="left:1087px;top:775px;font-size:8.16px;color:#000">::LiPConsumeDrugMagnitude_var</div>
<div class="t" style="left:1279px;top:775px;font-size:8.16px;color:#1a1aff">REF : 0000000000000000 (GlobalVariable)</div>
<div class="a" style="left:977px;top:795px;width:494px;height:1px;background:#a0a0a0"></div>
<div class="t" style="left:989.461765px;top:787px;font-size:8.16px;color:#000">4</div>
<div class="t" style="left:997px;top:787px;font-size:8.16px;color:#000">GlobalVariable</div>
<div class="t" style="left:1087px;top:787px;font-size:8.16px;color:#000">::LiPConsumeStrongAlcoholMagnitude_var</div>
<div class="t" style="left:1279px;top:787px;font-size:8.16px;color:#1a1aff">REF : 0000000000000000 (GlobalVariable)</div>
<div class="a" style="left:977px;top:807px;width:494px;height:1px;background:#a0a0a0"></div>
<div class="t" style="left:989.461765px;top:799px;font-size:8.16px;color:#000">5</div>
<div class="t" style="left:997px;top:799px;font-size:8.16px;color:#000">lip:updatemanager</div>
<div class="t" style="left:1087px;top:799px;font-size:8.16px;color:#000">::UpdateManager_var</div>
<div class="t" style="left:1279px;top:799px;font-size:8.16px;color:#1a1aff">REF : 0000000000000000 (lip:updatemanager)</div>
<div class="a" style="left:977px;top:819px;width:494px;height:1px;background:#a0a0a0"></div>
<div class="t" style="left:989.461765px;top:811px;font-size:8.16px;color:#000">6</div>
<div class="t" style="left:997px;top:811px;font-size:8.16px;color:#000">Keyword</div>
<div class="t" style="left:1087px;top:811px;font-size:8.16px;color:#000">CA_ObjType_ChemBad</div>
<div class="t" style="left:1279px;top:811px;font-size:8.16px;color:#000">REF : Keyword: *Fallout4.esm:000a7296 (000002...</div>
<div class="a" style="left:977px;top:831px;width:494px;height:1px;background:#a0a0a0"></div>
<div class="t" style="left:989.461765px;top:823px;font-size:8.16px;color:#000">7</div>
<div class="t" style="left:997px;top:823px;font-size:8.16px;color:#000">Keyword</div>
<div class="t" style="left:1087px;top:823px;font-size:8.16px;color:#000">CA_ObjType_Drink</div>
<div class="t" style="left:1279px;top:823px;font-size:8.16px;color:#000">REF : Keyword: *Fallout4.esm:0007956d (000002...</div>
<div class="a" style="left:977px;top:843px;width:494px;height:1px;background:#a0a0a0"></div>
<div class="t" style="left:989.461765px;top:835px;font-size:8.16px;color:#000">8</div>
<div class="t" style="left:997px;top:835px;font-size:8.16px;color:#000">Keyword</div>
<div class="t" style="left:1087px;top:835px;font-size:8.16px;color:#000">ObjectTypeAlcohol</div>
<div class="t" style="left:1279px;top:835px;font-size:8.16px;color:#000">REF : Keyword: *Fallout4.esm:0010c416 (000002...</div>
<div class="a" style="left:977px;top:736px;width:1px;height:108px;background:#a0a0a0"></div>
<div class="a" style="left:995px;top:736px;width:1px;height:108px;background:#a0a0a0"></div>
<div class="a" style="left:1085px;top:736px;width:1px;height:108px;background:#a0a0a0"></div>
<div class="a" style="left:1277px;top:736px;width:1px;height:108px;background:#a0a0a0"></div>
<div class="a" style="left:1470px;top:736px;width:1px;height:108px;background:#a0a0a0"></div>
<div class="a" style="left:977px;top:736px;width:494px;height:1px;background:#a0a0a0"></div><div class="a" style="left:0;top:1050px;width:1920px;height:30px;background:#0b1f2f"></div>
<div class="a" style="left:185px;top:1050px;width:36px;height:30px;background:#0d4d86"></div>
<div class="a" style="left:41px;top:1078px;width:30px;height:2px;background:#8fc3ea"></div>
<div class="a" style="left:78px;top:1078px;width:30px;height:2px;background:#8fc3ea"></div>
<div class="a" style="left:115px;top:1078px;width:30px;height:2px;background:#8fc3ea"></div>
<div class="a" style="left:151px;top:1078px;width:30px;height:2px;background:#8fc3ea"></div>
<div class="a" style="left:185px;top:1078px;width:36px;height:2px;background:#8fc3ea"></div>
<svg class="a" style="left:0;top:1050px" width="1920" height="30">
 <path d="M12 9.5 l5 -0.7 v5.7 h-5z M18 8.7 l6.5 -0.9 v7.2 h-6.5z M12 15.8 h5 v5.7 l-5 -0.7z M18 15.8 h6.5 v7.3 l-6.5 -0.9z" fill="#fff"/>
 <ellipse cx="56" cy="15" rx="8" ry="8.5" fill="none" stroke="#e0224b" stroke-width="1.8"/><ellipse cx="56" cy="15" rx="4" ry="7.2" fill="none" stroke="#e0224b" stroke-width="1.6"/>
 <path d="M85 9 h6 l1.5 1.5 h8.5 v11 h-16z" fill="#f6c445"/><rect x="85" y="12" width="16" height="9.5" fill="#ffd76a"/><path d="M89 21.5 v-4 h8 v4" fill="#2b8ae0"/><rect x="91" y="19" width="4" height="2.5" fill="#ffd76a"/>
 <circle cx="129.5" cy="15" r="8.5" fill="#1b3a6b"/><circle cx="132.5" cy="12" r="2.5" fill="none" stroke="#fff" stroke-width="1.3"/><path d="M121.5 16 l7 3 l3 -5" stroke="#fff" stroke-width="1.5" fill="none"/><circle cx="127.5" cy="18.5" r="1.8" fill="#fff"/>
 <path d="M160 21 l5 -14 l8 2 l1 13z" fill="#a8dbe8"/><path d="M160 21 l14 1 l-1 -13" fill="#5fb0c8"/><path d="M166 7 l8 2 l0 4" fill="#e8d59a"/>
 <rect x="194" y="8" width="18" height="14" fill="#2a2218"/><circle cx="200" cy="15" r="5.5" fill="#8b6a3c"/><circle cx="200" cy="15" r="1.5" fill="#d8c8a0"/><path d="M207 10 h3 M207 13 h3 M207 17 h3" stroke="#aaa" stroke-width="1"/>
</svg>
<div class="a" style="left:1916px;top:1050px;width:1px;height:30px;background:#5a6a78"></div>
<!-- tray -->
<svg class="a" style="left:1740px;top:1050px" width="180" height="30">
 <path d="M16 17.5 l4 -4 l4 4" fill="none" stroke="#fff" stroke-width="1.2"/>
 <g fill="none" stroke="#fff" stroke-width="1"><rect x="37" y="10.5" width="9" height="7"/><path d="M34 12 v8 h4 M41.5 17.5 v3 M38 20.5 h7"/></g>
 <path d="M51 12.5 h2.5 l3.5 -3 v12 l-3.5 -3 h-2.5z" fill="none" stroke="#fff" stroke-width="1"/><path d="M59 12 a4 4 0 0 1 0 6 M61 10 a7 7 0 0 1 0 10" fill="none" stroke="#888" stroke-width="1"/>
 <text x="70" y="18.5" font-size="9" fill="#fff" font-family="Liberation Sans">РУС</text>
 <text x="101" y="11" font-size="9" fill="#fff" font-family="Liberation Sans">2:54 AM</text>
 <text x="97" y="24.3" font-size="9" fill="#fff" font-family="Liberation Sans">3/28/2024</text>
 <path d="M149 9.5 h12 v9 h-6 l-3 3 v-3 h-3z" fill="#f4f4f4"/><path d="M151.5 12 h7 M151.5 14.5 h7 M151.5 17 h5" stroke="#999" stroke-width="0.8"/>
 <circle cx="160.5" cy="21.5" r="5.5" fill="#1b5c9e"/><text x="158.7" y="24.5" font-size="7.5" fill="#fff" font-family="Liberation Sans">1</text>
</svg>

</body></html>
